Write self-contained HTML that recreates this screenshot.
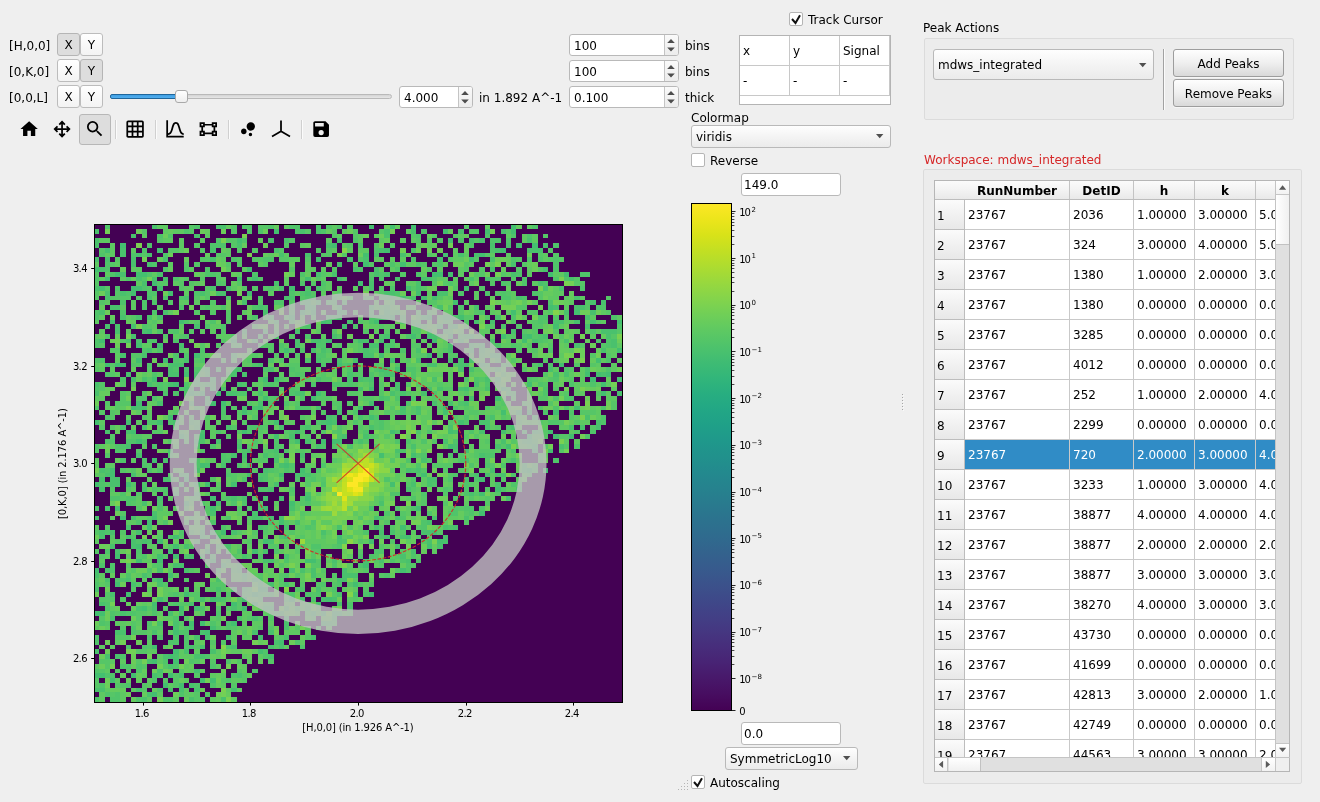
<!DOCTYPE html><html><head><meta charset="utf-8"><title>SliceViewer</title><style>
html,body{margin:0;padding:0}
body{width:1320px;height:802px;background:#efefef;position:relative;overflow:hidden;
 font-family:"DejaVu Sans","Liberation Sans",sans-serif;font-size:12px;color:#000;line-height:14px}
.a{position:absolute;box-sizing:border-box;white-space:nowrap}
.t{position:absolute;white-space:nowrap;line-height:14px;height:14px}
.btn{position:absolute;box-sizing:border-box;border:1px solid #9d9d9d;border-radius:3px;box-shadow:0 1px 0 rgba(255,255,255,0.55);overflow:visible;
 background:linear-gradient(#fefefe,#efefef 50%,#d9d9d9);text-align:center;white-space:nowrap}
.tb{position:absolute;box-sizing:border-box;border:1px solid #bcbcbc;border-radius:3px;
 background:linear-gradient(#ffffff,#f3f3f3);text-align:center;line-height:23px;font-size:12px}
.tb.on{background:#dddddd;border-color:#b5b5b5}
.edit{position:absolute;box-sizing:border-box;border:1px solid #b9b9b9;border-radius:3px;background:#fff;white-space:nowrap}
.cb{position:absolute;box-sizing:border-box;border:1px solid #b5b5b5;border-radius:2px;background:#fff;width:14px;height:14px}
.combo{position:absolute;box-sizing:border-box;border:1px solid #b9b9b9;border-radius:3px;
 background:linear-gradient(#fefefe,#f4f4f4 50%,#ebebeb);white-space:nowrap}
.grp{position:absolute;box-sizing:border-box;border:1px solid #dbdbdb;border-radius:2px;background:#ececec}
svg{position:absolute;overflow:visible}
#w{position:absolute;left:0;top:0;width:1320px;height:802px;will-change:transform}
</style></head><body><div id="w">
<div class="t" style="left:9px;top:39px">[H,0,0]</div>
<div class="tb on" style="left:57px;top:33px;width:23px;height:23px">X</div>
<div class="tb" style="left:80px;top:33px;width:23px;height:23px">Y</div>
<div class="t" style="left:9px;top:65px">[0,K,0]</div>
<div class="tb" style="left:57px;top:59px;width:23px;height:23px">X</div>
<div class="tb on" style="left:80px;top:59px;width:23px;height:23px">Y</div>
<div class="t" style="left:9px;top:91px">[0,0,L]</div>
<div class="tb" style="left:57px;top:85px;width:23px;height:23px">X</div>
<div class="tb" style="left:80px;top:85px;width:23px;height:23px">Y</div>
<div class="a" style="left:110px;top:94px;width:282px;height:5px;border:1px solid #b9b9b9;border-radius:3px;background:linear-gradient(#d4d4d4,#e6e6e6)"></div>
<div class="a" style="left:110px;top:94px;width:72px;height:5px;border:1px solid #1f669c;border-radius:2px;background:linear-gradient(#3f9fe3,#52aeee)"></div>
<div class="a" style="left:175px;top:90px;width:13px;height:13px;border:1px solid #a9a9a9;border-radius:3px;background:linear-gradient(#ffffff,#eeeeee)"></div>
<div class="edit" style="left:399px;top:86px;width:74px;height:22px"></div><div class="t" style="left:404px;top:91px">4.000</div><div class="a" style="left:458px;top:87px;width:14px;height:20px;background:linear-gradient(#fafafa,#ececec);border-left:1px solid #c4c4c4;border-radius:0 2px 2px 0"></div><svg style="left:458px;top:86px" width="15" height="22"><path d="M3.2 8.9l3.8-3.9 3.8 3.9z M3.2 13.5l3.8 3.9 3.8-3.9z" fill="#4d4d4d"/></svg>
<div class="t" style="left:479px;top:91px">in 1.892 A^-1</div>
<div class="edit" style="left:569px;top:34px;width:110px;height:22px"></div><div class="t" style="left:574px;top:39px">100</div><div class="a" style="left:664px;top:35px;width:14px;height:20px;background:linear-gradient(#fafafa,#ececec);border-left:1px solid #c4c4c4;border-radius:0 2px 2px 0"></div><svg style="left:664px;top:34px" width="15" height="22"><path d="M3.2 8.9l3.8-3.9 3.8 3.9z M3.2 13.5l3.8 3.9 3.8-3.9z" fill="#4d4d4d"/></svg>
<div class="t" style="left:685px;top:39px">bins</div>
<div class="edit" style="left:569px;top:60px;width:110px;height:22px"></div><div class="t" style="left:574px;top:65px">100</div><div class="a" style="left:664px;top:61px;width:14px;height:20px;background:linear-gradient(#fafafa,#ececec);border-left:1px solid #c4c4c4;border-radius:0 2px 2px 0"></div><svg style="left:664px;top:60px" width="15" height="22"><path d="M3.2 8.9l3.8-3.9 3.8 3.9z M3.2 13.5l3.8 3.9 3.8-3.9z" fill="#4d4d4d"/></svg>
<div class="t" style="left:685px;top:65px">bins</div>
<div class="edit" style="left:569px;top:86px;width:110px;height:22px"></div><div class="t" style="left:574px;top:91px">0.100</div><div class="a" style="left:664px;top:87px;width:14px;height:20px;background:linear-gradient(#fafafa,#ececec);border-left:1px solid #c4c4c4;border-radius:0 2px 2px 0"></div><svg style="left:664px;top:86px" width="15" height="22"><path d="M3.2 8.9l3.8-3.9 3.8 3.9z M3.2 13.5l3.8 3.9 3.8-3.9z" fill="#4d4d4d"/></svg>
<div class="t" style="left:685px;top:91px">thick</div>
<div class="a" style="left:79px;top:114px;width:32px;height:31px;border:1px solid #b7b7b7;border-radius:3px;background:#dddddd"></div>
<svg style="left:0;top:0" width="1320" height="802" viewBox="0 0 1320 802"><g fill="#000">
<path transform="translate(18.71 118.66) scale(0.870)" d="M10,20V14H14V20H19V12H22L12,3L2,12H5V20H10Z"/>
<path transform="translate(51.61 118.66) scale(0.870)" d="M13,11H18L16.5,9.5L17.92,8.08L21.84,12L17.92,15.92L16.5,14.5L18,13H13V18L14.5,16.5L15.92,17.92L12,21.84L8.08,17.92L9.5,16.5L11,18V13H6L7.5,14.5L6.08,15.92L2.16,12L6.08,8.08L7.5,9.5L6,11H11V6L9.5,7.5L8.08,6.08L12,2.16L15.92,6.08L14.5,7.5L13,6V11Z"/>
<path transform="translate(84.36 118.46) scale(0.870)" d="M9.5,3A6.5,6.5 0 0,1 16,9.5C16,11.11 15.41,12.59 14.44,13.73L14.71,14H15.5L20.5,19L19,20.5L14,15.5V14.71L13.73,14.44C12.59,15.41 11.11,16 9.5,16A6.5,6.5 0 0,1 3,9.5A6.5,6.5 0 0,1 9.5,3M9.5,5C7,5 5,7 5,9.5C5,12 7,14 9.5,14C12,14 14,12 14,9.5C14,7 12,5 9.5,5Z"/>
<path transform="translate(124.66 118.66) scale(0.870)" d="M10,4V8H14V4H10M16,4V8H20V4H16M16,10V14H20V10H16M16,16V20H20V16H16M14,20V16H10V20H14M8,20V16H4V20H8M8,14V10H4V14H8M8,8V4H4V8H8M10,14H14V10H10V14M4,2H20A2,2 0 0,1 22,4V20A2,2 0 0,1 20,22H4C2.92,22 2,21.1 2,20V4A2,2 0 0,1 4,2Z"/>
<path transform="translate(164.56 118.46) scale(0.870)" d="M9.96,11.31C10.82,8.1 11.5,6 13,6C14.5,6 15.18,8.1 16.04,11.31C17,14.92 18.1,19 22,19V17C19.8,17 19,14.54 17.97,10.8C17.08,7.46 16.15,4 13,4C9.85,4 8.92,7.46 8.03,10.8C7.03,14.54 6.2,17 4,17V2H2V22H22V20H4V19C7.9,19 9,14.92 9.96,11.31Z"/>
<path transform="translate(197.86 118.66) scale(0.870)" d="M2,4H8V6H16V4H22V10H20V14H22V20H16V18H8V20H2V14H4V10H2V4M16,10V8H8V10H6V14H8V16H16V14H18V10H16M4,6V8H6V6H4M18,6V8H20V6H18M4,16V18H6V16H4M18,16V18H20V16H18Z"/>
<path transform="translate(237.56 118.86) scale(0.870)" d="M7.2,11.2C8.97,11.2 10.4,12.63 10.4,14.4C10.4,16.17 8.97,17.6 7.2,17.6C5.43,17.6 4,16.17 4,14.4C4,12.63 5.43,11.2 7.2,11.2M14.8,16A2,2 0 0,1 16.8,18A2,2 0 0,1 14.8,20A2,2 0 0,1 12.8,18A2,2 0 0,1 14.8,16M15.2,4A4.8,4.8 0 0,1 20,8.8C20,11.45 17.85,13.6 15.2,13.6A4.8,4.8 0 0,1 10.4,8.8C10.4,6.15 12.55,4 15.2,4Z"/>
<path transform="translate(310.71 118.66) scale(0.870)" d="M15,9H5V5H15M12,19A3,3 0 0,1 9,16A3,3 0 0,1 12,13A3,3 0 0,1 15,16A3,3 0 0,1 12,19M17,3H5C3.89,3 3,3.9 3,5V19A2,2 0 0,0 5,21H19A2,2 0 0,0 21,19V7L17,3Z"/>
</g>
<path d="M281 120.6V131.3M281 131.3L272 136.6M281 131.3L290 136.6" stroke="#000" stroke-width="1.75" fill="none" stroke-linecap="butt"/>
<rect x="115" y="120" width="1" height="19" fill="#d0d0d0"/><rect x="116" y="120" width="1" height="19" fill="#fbfbfb"/>
<rect x="155" y="120" width="1" height="19" fill="#d0d0d0"/><rect x="156" y="120" width="1" height="19" fill="#fbfbfb"/>
<rect x="228" y="120" width="1" height="19" fill="#d0d0d0"/><rect x="229" y="120" width="1" height="19" fill="#fbfbfb"/>
<rect x="301" y="120" width="1" height="19" fill="#d0d0d0"/><rect x="302" y="120" width="1" height="19" fill="#fbfbfb"/>
</svg>
<div class="cb" style="left:789px;top:12px"></div><svg style="left:789px;top:12px" width="14" height="14"><path d="M3 7 L6.5 11 L11 3.2" fill="none" stroke="#111" stroke-width="2" stroke-linejoin="miter"/></svg>
<div class="t" style="left:808px;top:13px">Track Cursor</div>
<div class="a" style="left:739px;top:35px;width:152px;height:70px;background:#fff;border:1px solid #b4b4b4"></div>
<div class="a" style="left:789px;top:36px;width:1px;height:60px;background:#c8c8c8"></div>
<div class="a" style="left:839px;top:36px;width:1px;height:60px;background:#c8c8c8"></div>
<div class="a" style="left:889px;top:36px;width:1px;height:60px;background:#c8c8c8"></div>
<div class="a" style="left:740px;top:65px;width:150px;height:1px;background:#c8c8c8"></div>
<div class="a" style="left:740px;top:95px;width:150px;height:1px;background:#c8c8c8"></div>
<div class="t" style="left:743px;top:44px">x</div>
<div class="t" style="left:743px;top:74px">-</div>
<div class="t" style="left:793px;top:44px">y</div>
<div class="t" style="left:793px;top:74px">-</div>
<div class="t" style="left:843px;top:44px">Signal</div>
<div class="t" style="left:843px;top:74px">-</div>
<div class="t" style="left:691px;top:111px">Colormap</div>
<div class="combo" style="left:691px;top:125px;width:200px;height:23px"></div>
<div class="t" style="left:696px;top:130px">viridis</div>
<svg style="left:875.8px;top:134.0px" width="8" height="5"><path d="M0 0h7.4l-3.7 4.2z" fill="#505050"/></svg>
<div class="cb" style="left:691px;top:153px"></div>
<div class="t" style="left:710px;top:154px">Reverse</div>
<div class="edit" style="left:741px;top:173px;width:100px;height:23px"></div>
<div class="t" style="left:744px;top:178px">149.0</div>
<svg style="left:0;top:0" width="1320" height="802" viewBox="0 0 1320 802">
<defs><linearGradient id="vg" x1="0" y1="0" x2="0" y2="1"><stop offset="0.0000" stop-color="#fde725"/><stop offset="0.0312" stop-color="#ece51b"/><stop offset="0.0625" stop-color="#d8e219"/><stop offset="0.0938" stop-color="#c2df23"/><stop offset="0.1250" stop-color="#addc30"/><stop offset="0.1562" stop-color="#98d83e"/><stop offset="0.1875" stop-color="#84d44b"/><stop offset="0.2188" stop-color="#70cf57"/><stop offset="0.2500" stop-color="#5ec962"/><stop offset="0.2812" stop-color="#4ec36b"/><stop offset="0.3125" stop-color="#3fbc73"/><stop offset="0.3438" stop-color="#32b67a"/><stop offset="0.3750" stop-color="#28ae80"/><stop offset="0.4062" stop-color="#22a785"/><stop offset="0.4375" stop-color="#1fa088"/><stop offset="0.4688" stop-color="#1f988b"/><stop offset="0.5000" stop-color="#21918c"/><stop offset="0.5312" stop-color="#23898e"/><stop offset="0.5625" stop-color="#26828e"/><stop offset="0.5938" stop-color="#297a8e"/><stop offset="0.6250" stop-color="#2c728e"/><stop offset="0.6562" stop-color="#2f6b8e"/><stop offset="0.6875" stop-color="#33638d"/><stop offset="0.7188" stop-color="#375b8d"/><stop offset="0.7500" stop-color="#3b528b"/><stop offset="0.7812" stop-color="#3e4989"/><stop offset="0.8125" stop-color="#424086"/><stop offset="0.8438" stop-color="#453781"/><stop offset="0.8750" stop-color="#472d7b"/><stop offset="0.9062" stop-color="#482374"/><stop offset="0.9375" stop-color="#48186a"/><stop offset="0.9688" stop-color="#470d60"/><stop offset="1.0000" stop-color="#440154"/></linearGradient></defs>
<rect x="691.5" y="203.5" width="40.0" height="507.0" fill="url(#vg)" stroke="#000" stroke-width="1" shape-rendering="crispEdges"/>
<text x="739.3" y="682.8" font-size="10" textLength="11.6" lengthAdjust="spacing">10</text><text x="751.6" y="678.5" font-size="7">−8</text>
<text x="739.3" y="636.1" font-size="10" textLength="11.6" lengthAdjust="spacing">10</text><text x="751.6" y="631.8" font-size="7">−7</text>
<text x="739.3" y="589.4" font-size="10" textLength="11.6" lengthAdjust="spacing">10</text><text x="751.6" y="585.1" font-size="7">−6</text>
<text x="739.3" y="542.7" font-size="10" textLength="11.6" lengthAdjust="spacing">10</text><text x="751.6" y="538.4" font-size="7">−5</text>
<text x="739.3" y="496.0" font-size="10" textLength="11.6" lengthAdjust="spacing">10</text><text x="751.6" y="491.7" font-size="7">−4</text>
<text x="739.3" y="449.3" font-size="10" textLength="11.6" lengthAdjust="spacing">10</text><text x="751.6" y="445.0" font-size="7">−3</text>
<text x="739.3" y="402.6" font-size="10" textLength="11.6" lengthAdjust="spacing">10</text><text x="751.6" y="398.3" font-size="7">−2</text>
<text x="739.3" y="355.9" font-size="10" textLength="11.6" lengthAdjust="spacing">10</text><text x="751.6" y="351.6" font-size="7">−1</text>
<text x="739.3" y="309.2" font-size="10" textLength="11.6" lengthAdjust="spacing">10</text><text x="751.6" y="304.9" font-size="7">0</text>
<text x="739.3" y="262.5" font-size="10" textLength="11.6" lengthAdjust="spacing">10</text><text x="751.6" y="258.2" font-size="7">1</text>
<text x="739.3" y="215.8" font-size="10" textLength="11.6" lengthAdjust="spacing">10</text><text x="751.6" y="211.5" font-size="7">2</text>
<text x="739.3" y="714.7" font-size="10">0</text>
<path d="M732 678.5h3.5M732 632.5h3.5M732 585.5h3.5M732 538.5h3.5M732 492.5h3.5M732 445.5h3.5M732 398.5h3.5M732 351.5h3.5M732 305.5h3.5M732 258.5h3.5M732 211.5h3.5M732 710.5h3.5" stroke="#000" stroke-width="0.85" fill="none"/>
<path d="M732 664.5h2.4M732 656.5h2.4M732 650.5h2.4M732 646.5h2.4M732 642.5h2.4M732 639.5h2.4M732 636.5h2.4M732 634.5h2.4M732 618.5h2.4M732 609.5h2.4M732 603.5h2.4M732 599.5h2.4M732 595.5h2.4M732 592.5h2.4M732 589.5h2.4M732 587.5h2.4M732 571.5h2.4M732 563.5h2.4M732 557.5h2.4M732 552.5h2.4M732 549.5h2.4M732 545.5h2.4M732 543.5h2.4M732 540.5h2.4M732 524.5h2.4M732 516.5h2.4M732 510.5h2.4M732 506.5h2.4M732 502.5h2.4M732 499.5h2.4M732 496.5h2.4M732 494.5h2.4M732 477.5h2.4M732 469.5h2.4M732 463.5h2.4M732 459.5h2.4M732 455.5h2.4M732 452.5h2.4M732 449.5h2.4M732 447.5h2.4M732 431.5h2.4M732 423.5h2.4M732 417.5h2.4M732 412.5h2.4M732 408.5h2.4M732 405.5h2.4M732 403.5h2.4M732 400.5h2.4M732 384.5h2.4M732 376.5h2.4M732 370.5h2.4M732 365.5h2.4M732 362.5h2.4M732 359.5h2.4M732 356.5h2.4M732 354.5h2.4M732 337.5h2.4M732 329.5h2.4M732 323.5h2.4M732 319.5h2.4M732 315.5h2.4M732 312.5h2.4M732 309.5h2.4M732 307.5h2.4M732 291.5h2.4M732 282.5h2.4M732 277.5h2.4M732 272.5h2.4M732 268.5h2.4M732 265.5h2.4M732 263.5h2.4M732 260.5h2.4M732 244.5h2.4M732 236.5h2.4M732 230.5h2.4M732 225.5h2.4M732 222.5h2.4M732 219.5h2.4M732 216.5h2.4M732 213.5h2.4" stroke="#000" stroke-width="0.7" fill="none"/>
</svg>
<div class="edit" style="left:741px;top:722px;width:100px;height:23px"></div>
<div class="t" style="left:744px;top:727px">0.0</div>
<div class="combo" style="left:725px;top:747px;width:133px;height:23px"></div>
<div class="t" style="left:730px;top:752px">SymmetricLog10</div>
<svg style="left:842.8px;top:756.0px" width="8" height="5"><path d="M0 0h7.4l-3.7 4.2z" fill="#505050"/></svg>
<div class="cb" style="left:691px;top:775px"></div><svg style="left:691px;top:775px" width="14" height="14"><path d="M3 7 L6.5 11 L11 3.2" fill="none" stroke="#111" stroke-width="2" stroke-linejoin="miter"/></svg>
<div class="t" style="left:710px;top:776px">Autoscaling</div>
<svg style="left:0;top:0" width="1320" height="802"><rect x="678" y="789" width="1" height="1" fill="#b4b4b4"/><rect x="681" y="786" width="1" height="1" fill="#b4b4b4"/><rect x="681" y="789" width="1" height="1" fill="#b4b4b4"/><rect x="684" y="783" width="1" height="1" fill="#b4b4b4"/><rect x="684" y="786" width="1" height="1" fill="#b4b4b4"/><rect x="684" y="789" width="1" height="1" fill="#b4b4b4"/><rect x="687" y="780" width="1" height="1" fill="#b4b4b4"/><rect x="687" y="783" width="1" height="1" fill="#b4b4b4"/><rect x="687" y="786" width="1" height="1" fill="#b4b4b4"/><rect x="687" y="789" width="1" height="1" fill="#b4b4b4"/></svg>
<svg style="left:0;top:0" width="1320" height="802" viewBox="0 0 1320 802">
<rect x="94" y="224" width="529" height="479" fill="#440154"/>
<g shape-rendering="crispEdges">
<path fill="#50c46a" d="M105 224h5v5h-5zM194 224h6v5h-6zM242 224h10v5h-10zM268 224h6v5h-6zM289 224h11v5h-11zM326 224h6v5h-6zM337 224h5v5h-5zM532 224h6v5h-6zM184 229h5v5h-5zM247 229h5v5h-5zM258 229h5v5h-5zM295 229h5v5h-5zM321 229h5v5h-5zM421 229h6v5h-6zM157 234h6v4h-6zM168 234h5v4h-5zM416 234h5v4h-5zM485 234h5v4h-5zM511 234h5v4h-5zM527 234h5v4h-5zM216 238h5v5h-5zM242 238h5v5h-5zM353 238h5v5h-5zM458 238h6v5h-6zM490 238h11v5h-11zM506 238h5v5h-5zM147 243h5v5h-5zM210 243h16v5h-16zM358 243h5v5h-5zM469 243h5v5h-5zM553 243h6v5h-6zM142 248h5v5h-5zM374 248h5v5h-5zM411 248h5v5h-5zM490 248h5v5h-5zM99 253h6v4h-6zM131 253h5v4h-5zM163 253h5v4h-5zM231 257h6v5h-6zM263 257h11v5h-11zM411 257h5v5h-5zM511 257h5v5h-5zM527 257h5v5h-5zM538 257h5v5h-5zM553 257h6v5h-6zM105 262h5v5h-5zM152 262h5v5h-5zM390 262h5v5h-5zM416 262h5v5h-5zM437 262h6v5h-6zM553 262h6v5h-6zM105 267h5v5h-5zM163 267h5v5h-5zM184 267h5v5h-5zM205 267h5v5h-5zM358 267h5v5h-5zM395 267h5v5h-5zM553 267h6v5h-6zM110 272h5v5h-5zM147 272h5v5h-5zM205 272h11v5h-11zM252 272h6v5h-6zM300 272h5v5h-5zM379 272h5v5h-5zM416 272h5v5h-5zM516 272h6v5h-6zM580 272h10v5h-10zM94 277h5v4h-5zM126 277h5v4h-5zM173 277h6v4h-6zM369 277h5v4h-5zM379 277h5v4h-5zM432 277h5v4h-5zM495 277h6v4h-6zM522 277h5v4h-5zM553 277h6v4h-6zM564 277h5v4h-5zM216 281h5v5h-5zM300 281h5v5h-5zM321 281h5v5h-5zM448 281h5v5h-5zM501 281h5v5h-5zM522 281h5v5h-5zM543 281h5v5h-5zM115 286h5v5h-5zM142 286h5v5h-5zM268 286h6v5h-6zM305 286h6v5h-6zM390 286h5v5h-5zM580 286h5v5h-5zM126 291h5v5h-5zM147 291h10v5h-10zM194 291h6v5h-6zM289 291h6v5h-6zM300 291h5v5h-5zM395 291h5v5h-5zM458 291h6v5h-6zM485 291h5v5h-5zM501 291h5v5h-5zM532 291h6v5h-6zM163 296h5v4h-5zM179 296h5v4h-5zM226 296h5v4h-5zM258 296h5v4h-5zM305 296h11v4h-11zM332 296h5v4h-5zM363 296h6v4h-6zM379 296h16v4h-16zM501 296h10v4h-10zM522 296h5v4h-5zM120 300h6v5h-6zM142 300h5v5h-5zM152 300h5v5h-5zM274 300h10v5h-10zM300 300h5v5h-5zM326 300h11v5h-11zM342 300h5v5h-5zM548 300h5v5h-5zM142 305h5v5h-5zM179 305h5v5h-5zM205 305h5v5h-5zM221 305h5v5h-5zM252 305h6v5h-6zM263 305h5v5h-5zM384 305h6v5h-6zM458 305h6v5h-6zM596 305h10v5h-10zM94 310h5v5h-5zM120 310h6v5h-6zM152 310h5v5h-5zM289 310h6v5h-6zM369 310h5v5h-5zM395 310h5v5h-5zM479 310h6v5h-6zM94 315h5v5h-5zM252 315h6v5h-6zM332 315h5v5h-5zM369 315h10v5h-10zM453 315h5v5h-5zM511 315h5v5h-5zM538 315h10v5h-10zM611 315h6v5h-6zM184 320h5v4h-5zM210 320h6v4h-6zM289 320h6v4h-6zM369 320h5v4h-5zM400 320h6v4h-6zM538 320h5v4h-5zM142 324h5v5h-5zM205 324h5v5h-5zM221 324h5v5h-5zM305 324h6v5h-6zM353 324h5v5h-5zM416 324h5v5h-5zM448 324h5v5h-5zM501 324h5v5h-5zM617 324h5v5h-5zM157 329h6v5h-6zM173 329h6v5h-6zM411 329h10v5h-10zM427 329h5v5h-5zM443 329h5v5h-5zM590 329h6v5h-6zM105 334h5v5h-5zM184 334h5v5h-5zM258 334h5v5h-5zM274 334h5v5h-5zM305 334h6v5h-6zM379 334h5v5h-5zM406 334h5v5h-5zM464 334h5v5h-5zM538 334h5v5h-5zM94 339h5v4h-5zM147 339h10v4h-10zM173 339h6v4h-6zM321 339h5v4h-5zM390 339h5v4h-5zM490 339h5v4h-5zM538 339h5v4h-5zM596 339h5v4h-5zM606 339h5v4h-5zM94 343h5v5h-5zM258 343h5v5h-5zM279 343h5v5h-5zM316 343h10v5h-10zM384 343h11v5h-11zM495 343h6v5h-6zM511 343h5v5h-5zM606 343h5v5h-5zM142 348h5v5h-5zM157 348h6v5h-6zM200 348h5v5h-5zM300 348h5v5h-5zM369 348h5v5h-5zM400 348h6v5h-6zM479 348h6v5h-6zM548 348h5v5h-5zM173 353h6v5h-6zM184 353h5v5h-5zM316 353h10v5h-10zM94 358h11v5h-11zM173 358h6v5h-6zM200 358h5v5h-5zM268 358h6v5h-6zM305 358h6v5h-6zM606 358h5v5h-5zM147 363h5v4h-5zM252 363h6v4h-6zM321 363h5v4h-5zM342 363h5v4h-5zM506 363h5v4h-5zM548 363h5v4h-5zM173 367h6v5h-6zM194 367h6v5h-6zM263 367h5v5h-5zM289 367h6v5h-6zM347 367h6v5h-6zM374 367h5v5h-5zM406 367h10v5h-10zM495 367h6v5h-6zM564 367h5v5h-5zM606 367h5v5h-5zM105 372h5v5h-5zM152 372h5v5h-5zM205 372h5v5h-5zM295 372h5v5h-5zM369 372h5v5h-5zM379 372h5v5h-5zM411 372h5v5h-5zM120 377h6v5h-6zM221 377h5v5h-5zM363 377h6v5h-6zM411 377h5v5h-5zM464 377h5v5h-5zM474 377h5v5h-5zM527 377h5v5h-5zM553 377h6v5h-6zM157 382h6v5h-6zM184 382h5v5h-5zM194 382h6v5h-6zM205 382h11v5h-11zM242 382h5v5h-5zM263 382h11v5h-11zM311 382h5v5h-5zM332 382h10v5h-10zM347 382h6v5h-6zM369 382h5v5h-5zM485 382h5v5h-5zM538 382h5v5h-5zM569 382h5v5h-5zM590 382h6v5h-6zM94 387h5v4h-5zM157 387h6v4h-6zM179 387h5v4h-5zM189 387h5v4h-5zM221 387h5v4h-5zM289 387h6v4h-6zM506 387h5v4h-5zM543 387h5v4h-5zM163 391h5v5h-5zM173 391h6v5h-6zM184 391h5v5h-5zM194 391h6v5h-6zM237 391h10v5h-10zM289 391h6v5h-6zM432 391h5v5h-5zM506 391h10v5h-10zM543 391h5v5h-5zM142 396h5v5h-5zM152 396h5v5h-5zM274 396h5v5h-5zM300 396h5v5h-5zM384 396h6v5h-6zM395 396h5v5h-5zM411 396h5v5h-5zM553 396h6v5h-6zM564 396h10v5h-10zM189 401h5v5h-5zM268 401h6v5h-6zM284 401h5v5h-5zM406 401h5v5h-5zM458 401h6v5h-6zM94 406h5v4h-5zM295 406h16v4h-16zM337 406h5v4h-5zM374 406h5v4h-5zM453 406h5v4h-5zM485 406h5v4h-5zM553 406h6v4h-6zM564 406h5v4h-5zM601 406h5v4h-5zM221 410h5v5h-5zM353 410h5v5h-5zM543 410h5v5h-5zM569 410h5v5h-5zM105 415h5v5h-5zM332 415h5v5h-5zM374 415h5v5h-5zM464 415h5v5h-5zM601 415h5v5h-5zM147 420h10v5h-10zM168 420h5v5h-5zM189 420h5v5h-5zM316 420h5v5h-5zM353 420h5v5h-5zM379 420h5v5h-5zM464 420h5v5h-5zM548 420h11v5h-11zM601 420h5v5h-5zM194 425h6v5h-6zM247 425h16v5h-16zM300 425h5v5h-5zM326 425h6v5h-6zM337 425h5v5h-5zM379 425h5v5h-5zM506 425h5v5h-5zM216 430h5v4h-5zM247 430h5v4h-5zM289 430h6v4h-6zM337 430h5v4h-5zM363 430h6v4h-6zM395 430h5v4h-5zM416 430h5v4h-5zM427 430h5v4h-5zM469 430h5v4h-5zM538 430h5v4h-5zM590 430h6v4h-6zM194 434h6v5h-6zM337 434h5v5h-5zM585 434h5v5h-5zM105 439h10v5h-10zM126 439h10v5h-10zM142 439h5v5h-5zM200 439h5v5h-5zM237 439h5v5h-5zM252 439h6v5h-6zM274 439h5v5h-5zM395 439h5v5h-5zM406 439h5v5h-5zM421 439h6v5h-6zM453 439h5v5h-5zM522 439h5v5h-5zM94 444h5v5h-5zM115 444h11v5h-11zM152 444h5v5h-5zM194 444h6v5h-6zM210 444h6v5h-6zM274 444h5v5h-5zM321 444h5v5h-5zM347 444h6v5h-6zM574 444h6v5h-6zM115 449h5v4h-5zM242 449h5v4h-5zM268 449h6v4h-6zM284 449h5v4h-5zM400 449h6v4h-6zM453 449h5v4h-5zM511 449h5v4h-5zM168 453h5v5h-5zM221 453h5v5h-5zM274 453h5v5h-5zM421 453h6v5h-6zM448 453h5v5h-5zM485 453h10v5h-10zM120 458h6v5h-6zM142 458h5v5h-5zM189 458h11v5h-11zM221 458h10v5h-10zM242 458h5v5h-5zM406 458h5v5h-5zM458 458h6v5h-6zM553 458h6v5h-6zM142 463h5v5h-5zM194 463h6v5h-6zM237 463h5v5h-5zM289 463h6v5h-6zM321 463h5v5h-5zM416 463h5v5h-5zM469 463h5v5h-5zM485 463h5v5h-5zM501 463h5v5h-5zM105 468h5v5h-5zM147 468h5v5h-5zM157 468h6v5h-6zM268 468h6v5h-6zM284 468h5v5h-5zM316 468h5v5h-5zM411 468h5v5h-5zM179 473h5v4h-5zM226 473h5v4h-5zM258 473h10v4h-10zM453 473h5v4h-5zM495 473h6v4h-6zM511 473h5v4h-5zM242 477h5v5h-5zM263 477h5v5h-5zM295 477h5v5h-5zM311 477h5v5h-5zM384 477h6v5h-6zM411 477h5v5h-5zM448 477h5v5h-5zM474 477h5v5h-5zM99 482h6v5h-6zM142 482h5v5h-5zM179 482h5v5h-5zM321 482h5v5h-5zM432 482h5v5h-5zM464 482h5v5h-5zM511 482h5v5h-5zM152 487h5v5h-5zM163 487h5v5h-5zM173 487h6v5h-6zM258 487h10v5h-10zM289 487h6v5h-6zM443 487h5v5h-5zM464 487h5v5h-5zM501 487h5v5h-5zM120 492h6v4h-6zM390 492h10v4h-10zM421 492h6v4h-6zM464 492h5v4h-5zM110 496h10v5h-10zM126 496h10v5h-10zM226 496h5v5h-5zM411 496h5v5h-5zM453 496h5v5h-5zM126 501h5v5h-5zM157 501h6v5h-6zM200 501h5v5h-5zM231 501h6v5h-6zM242 501h5v5h-5zM305 501h6v5h-6zM94 506h5v5h-5zM157 506h6v5h-6zM258 506h5v5h-5zM395 506h5v5h-5zM411 506h5v5h-5zM453 506h5v5h-5zM464 506h10v5h-10zM479 506h6v5h-6zM384 511h6v5h-6zM427 511h5v5h-5zM448 511h10v5h-10zM469 511h5v5h-5zM226 516h5v4h-5zM379 516h5v4h-5zM400 516h6v4h-6zM136 520h6v5h-6zM163 520h5v5h-5zM184 520h5v5h-5zM210 520h6v5h-6zM311 520h5v5h-5zM421 520h6v5h-6zM221 525h5v5h-5zM263 525h5v5h-5zM305 525h6v5h-6zM421 525h6v5h-6zM448 525h5v5h-5zM105 530h5v5h-5zM179 530h5v5h-5zM363 530h6v5h-6zM168 535h5v4h-5zM279 535h5v4h-5zM379 535h5v4h-5zM136 539h6v5h-6zM147 539h5v5h-5zM194 539h6v5h-6zM342 539h5v5h-5zM311 544h10v5h-10zM337 544h5v5h-5zM105 549h5v5h-5zM136 549h6v5h-6zM237 549h5v5h-5zM274 549h5v5h-5zM374 549h10v5h-10zM142 554h5v5h-5zM184 554h5v5h-5zM200 554h5v5h-5zM210 554h6v5h-6zM258 554h5v5h-5zM358 554h5v5h-5zM369 554h5v5h-5zM411 554h5v5h-5zM205 559h5v4h-5zM226 559h5v4h-5zM284 559h5v4h-5zM390 559h5v4h-5zM400 559h6v4h-6zM416 559h5v4h-5zM99 563h6v5h-6zM110 563h5v5h-5zM157 563h6v5h-6zM237 563h5v5h-5zM332 563h5v5h-5zM358 563h5v5h-5zM406 563h5v5h-5zM110 568h5v5h-5zM147 568h5v5h-5zM237 568h5v5h-5zM406 568h5v5h-5zM126 573h5v5h-5zM284 573h5v5h-5zM384 573h6v5h-6zM115 578h11v4h-11zM152 578h5v4h-5zM242 578h5v4h-5zM258 578h5v4h-5zM94 582h5v5h-5zM321 582h5v5h-5zM337 582h5v5h-5zM242 587h5v5h-5zM300 587h5v5h-5zM332 587h5v5h-5zM173 592h6v5h-6zM258 592h5v5h-5zM268 592h6v5h-6zM289 592h6v5h-6zM305 592h6v5h-6zM316 592h5v5h-5zM363 592h6v5h-6zM221 597h5v5h-5zM311 597h5v5h-5zM105 602h5v4h-5zM173 602h6v4h-6zM347 602h6v4h-6zM105 606h5v5h-5zM200 606h5v5h-5zM284 606h5v5h-5zM295 606h5v5h-5zM305 606h6v5h-6zM347 606h6v5h-6zM110 611h5v5h-5zM126 611h10v5h-10zM152 611h5v5h-5zM216 611h5v5h-5zM274 611h10v5h-10zM173 616h6v5h-6zM237 616h5v5h-5zM332 616h5v5h-5zM99 621h6v5h-6zM147 621h5v5h-5zM210 621h6v5h-6zM226 621h5v5h-5zM326 621h6v5h-6zM131 626h5v4h-5zM184 626h5v4h-5zM226 626h5v4h-5zM316 626h5v4h-5zM131 630h5v5h-5zM179 630h10v5h-10zM94 635h5v5h-5zM147 635h5v5h-5zM157 635h6v5h-6zM173 635h6v5h-6zM184 635h5v5h-5zM94 640h5v5h-5zM168 640h11v5h-11zM184 640h5v5h-5zM295 640h5v5h-5zM126 645h5v4h-5zM142 645h5v4h-5zM184 645h5v4h-5zM226 645h5v4h-5zM300 645h5v4h-5zM263 649h5v5h-5zM120 654h6v5h-6zM205 654h5v5h-5zM263 654h5v5h-5zM163 659h5v5h-5zM189 659h5v5h-5zM226 659h5v5h-5zM120 664h11v5h-11zM136 664h6v5h-6zM173 664h6v5h-6zM210 664h6v5h-6zM94 669h5v4h-5zM136 669h6v4h-6zM252 669h6v4h-6zM105 673h10v5h-10zM157 673h6v5h-6zM231 673h6v5h-6zM152 678h5v5h-5zM226 678h5v5h-5zM99 683h6v5h-6zM126 683h5v5h-5zM194 683h6v5h-6zM210 683h6v5h-6zM157 688h6v4h-6zM105 692h5v5h-5zM115 692h5v5h-5zM179 692h5v5h-5zM94 697h5v5h-5zM110 697h10v5h-10zM136 697h6v5h-6zM163 697h10v5h-10z"/>
<path fill="#4ac16d" d="M152 224h5v5h-5zM216 224h10v5h-10zM316 224h5v5h-5zM94 229h5v5h-5zM300 229h5v5h-5zM316 229h5v5h-5zM384 229h6v5h-6zM411 229h5v5h-5zM458 229h6v5h-6zM501 229h5v5h-5zM131 234h5v4h-5zM194 234h6v4h-6zM384 234h6v4h-6zM94 238h5v5h-5zM268 238h6v5h-6zM284 238h5v5h-5zM337 238h5v5h-5zM469 238h5v5h-5zM479 238h6v5h-6zM527 238h5v5h-5zM94 243h5v5h-5zM237 243h5v5h-5zM326 243h6v5h-6zM490 243h5v5h-5zM506 243h5v5h-5zM543 243h5v5h-5zM120 248h6v5h-6zM210 248h6v5h-6zM274 248h5v5h-5zM379 248h5v5h-5zM495 248h6v5h-6zM527 248h16v5h-16zM120 253h6v4h-6zM136 253h6v4h-6zM147 253h5v4h-5zM279 253h5v4h-5zM305 253h6v4h-6zM374 253h5v4h-5zM400 253h6v4h-6zM458 253h6v4h-6zM474 253h5v4h-5zM94 257h5v5h-5zM105 257h5v5h-5zM131 257h5v5h-5zM163 257h5v5h-5zM210 257h6v5h-6zM347 257h6v5h-6zM363 257h6v5h-6zM437 257h6v5h-6zM490 257h5v5h-5zM131 262h5v5h-5zM147 262h5v5h-5zM337 262h5v5h-5zM511 262h5v5h-5zM99 267h6v5h-6zM353 267h5v5h-5zM374 267h5v5h-5zM490 267h5v5h-5zM543 267h5v5h-5zM120 272h6v5h-6zM157 272h6v5h-6zM316 272h5v5h-5zM332 272h5v5h-5zM374 272h5v5h-5zM384 272h6v5h-6zM511 272h5v5h-5zM136 277h6v4h-6zM152 277h5v4h-5zM163 277h5v4h-5zM337 277h5v4h-5zM395 277h5v4h-5zM421 277h11v4h-11zM469 277h5v4h-5zM485 277h5v4h-5zM569 277h5v4h-5zM142 281h5v5h-5zM274 281h5v5h-5zM369 281h5v5h-5zM416 281h5v5h-5zM538 281h5v5h-5zM94 286h5v5h-5zM210 286h6v5h-6zM226 286h5v5h-5zM279 286h5v5h-5zM316 286h5v5h-5zM369 286h5v5h-5zM416 286h5v5h-5zM543 286h5v5h-5zM559 286h5v5h-5zM105 291h5v5h-5zM120 291h6v5h-6zM200 291h5v5h-5zM216 291h10v5h-10zM305 291h6v5h-6zM384 291h11v5h-11zM437 291h11v5h-11zM105 296h5v4h-5zM147 296h5v4h-5zM184 296h5v4h-5zM284 296h11v4h-11zM411 296h5v4h-5zM516 296h6v4h-6zM574 296h6v4h-6zM242 300h5v5h-5zM305 300h6v5h-6zM316 300h5v5h-5zM590 300h6v5h-6zM601 300h5v5h-5zM110 305h10v5h-10zM258 305h5v5h-5zM305 305h11v5h-11zM337 305h5v5h-5zM369 305h5v5h-5zM437 305h6v5h-6zM474 305h5v5h-5zM553 305h6v5h-6zM574 305h11v5h-11zM99 310h6v5h-6zM163 310h5v5h-5zM263 310h5v5h-5zM342 310h5v5h-5zM384 310h6v5h-6zM564 310h5v5h-5zM590 310h6v5h-6zM120 315h6v5h-6zM136 315h6v5h-6zM147 315h5v5h-5zM157 315h6v5h-6zM268 315h6v5h-6zM326 315h6v5h-6zM337 315h5v5h-5zM379 315h11v5h-11zM421 315h6v5h-6zM443 315h10v5h-10zM495 315h6v5h-6zM585 315h5v5h-5zM274 320h5v4h-5zM326 320h6v4h-6zM347 320h6v4h-6zM474 320h5v4h-5zM490 320h5v4h-5zM553 320h11v4h-11zM574 320h6v4h-6zM105 324h5v5h-5zM115 324h5v5h-5zM131 324h5v5h-5zM194 324h6v5h-6zM437 324h6v5h-6zM453 324h5v5h-5zM585 324h5v5h-5zM115 329h5v5h-5zM142 329h5v5h-5zM242 329h5v5h-5zM263 329h5v5h-5zM295 329h5v5h-5zM511 329h5v5h-5zM601 329h16v5h-16zM131 334h5v5h-5zM332 334h5v5h-5zM384 334h6v5h-6zM432 334h5v5h-5zM469 334h5v5h-5zM522 334h5v5h-5zM543 334h5v5h-5zM606 334h5v5h-5zM126 339h5v4h-5zM136 339h6v4h-6zM252 339h6v4h-6zM295 339h5v4h-5zM311 339h10v4h-10zM363 339h6v4h-6zM458 339h6v4h-6zM532 339h6v4h-6zM564 339h5v4h-5zM611 339h6v4h-6zM179 343h5v5h-5zM295 343h5v5h-5zM369 343h10v5h-10zM448 343h5v5h-5zM469 343h5v5h-5zM479 343h6v5h-6zM574 343h6v5h-6zM611 343h6v5h-6zM147 348h5v5h-5zM311 348h5v5h-5zM321 348h5v5h-5zM363 348h6v5h-6zM416 348h5v5h-5zM448 348h5v5h-5zM469 348h5v5h-5zM601 348h5v5h-5zM120 353h6v5h-6zM142 353h5v5h-5zM231 353h6v5h-6zM363 353h11v5h-11zM490 353h11v5h-11zM184 358h5v5h-5zM316 358h5v5h-5zM337 358h5v5h-5zM353 358h5v5h-5zM416 358h5v5h-5zM448 358h5v5h-5zM458 358h6v5h-6zM469 358h5v5h-5zM168 363h16v4h-16zM258 363h5v4h-5zM347 363h6v4h-6zM427 363h10v4h-10zM458 363h11v4h-11zM479 363h6v4h-6zM538 363h5v4h-5zM168 367h5v5h-5zM184 367h5v5h-5zM205 367h5v5h-5zM216 367h5v5h-5zM231 367h11v5h-11zM268 367h6v5h-6zM384 367h6v5h-6zM458 367h6v5h-6zM469 367h5v5h-5zM548 367h5v5h-5zM585 367h5v5h-5zM126 372h5v5h-5zM168 372h11v5h-11zM194 372h6v5h-6zM231 372h6v5h-6zM242 372h5v5h-5zM347 372h6v5h-6zM384 372h11v5h-11zM553 372h6v5h-6zM564 372h5v5h-5zM601 372h5v5h-5zM131 377h5v5h-5zM142 377h5v5h-5zM194 377h6v5h-6zM210 377h6v5h-6zM316 377h5v5h-5zM347 377h6v5h-6zM358 377h5v5h-5zM369 377h5v5h-5zM432 377h5v5h-5zM485 377h5v5h-5zM495 377h6v5h-6zM94 382h5v5h-5zM147 382h5v5h-5zM168 382h5v5h-5zM237 382h5v5h-5zM395 382h5v5h-5zM474 382h5v5h-5zM184 387h5v4h-5zM210 387h6v4h-6zM358 387h5v4h-5zM395 387h5v4h-5zM427 387h5v4h-5zM437 387h6v4h-6zM458 387h6v4h-6zM485 387h5v4h-5zM94 391h5v5h-5zM226 391h11v5h-11zM258 391h5v5h-5zM295 391h10v5h-10zM390 391h5v5h-5zM400 391h6v5h-6zM421 391h6v5h-6zM617 391h5v5h-5zM205 396h5v5h-5zM379 396h5v5h-5zM469 396h5v5h-5zM157 401h6v5h-6zM205 401h5v5h-5zM258 401h5v5h-5zM432 401h5v5h-5zM448 401h5v5h-5zM464 401h5v5h-5zM136 406h11v4h-11zM221 406h5v4h-5zM242 406h5v4h-5zM252 406h6v4h-6zM316 406h5v4h-5zM416 406h5v4h-5zM337 410h5v5h-5zM400 410h6v5h-6zM416 410h5v5h-5zM516 410h6v5h-6zM326 415h6v5h-6zM358 415h5v5h-5zM490 415h5v5h-5zM532 415h6v5h-6zM585 415h5v5h-5zM173 420h6v5h-6zM321 420h5v5h-5zM332 420h5v5h-5zM479 420h11v5h-11zM596 420h5v5h-5zM120 425h6v5h-6zM142 425h5v5h-5zM226 425h5v5h-5zM279 425h5v5h-5zM305 425h6v5h-6zM369 425h5v5h-5zM448 425h5v5h-5zM485 425h5v5h-5zM511 425h5v5h-5zM569 425h5v5h-5zM580 425h5v5h-5zM596 425h5v5h-5zM105 430h5v4h-5zM126 430h5v4h-5zM200 430h5v4h-5zM453 430h5v4h-5zM479 430h6v4h-6zM501 430h5v4h-5zM522 430h5v4h-5zM532 430h6v4h-6zM289 434h6v5h-6zM342 434h5v5h-5zM363 434h6v5h-6zM216 439h5v5h-5zM305 439h6v5h-6zM358 439h5v5h-5zM443 439h5v5h-5zM501 439h5v5h-5zM527 439h5v5h-5zM126 444h5v5h-5zM237 444h5v5h-5zM316 444h5v5h-5zM411 444h5v5h-5zM453 444h5v5h-5zM495 444h6v5h-6zM532 444h6v5h-6zM559 444h5v5h-5zM168 449h5v4h-5zM247 449h5v4h-5zM274 449h5v4h-5zM395 449h5v4h-5zM136 453h6v5h-6zM231 453h6v5h-6zM242 453h5v5h-5zM263 453h5v5h-5zM300 453h5v5h-5zM479 453h6v5h-6zM163 458h5v5h-5zM274 458h5v5h-5zM421 458h6v5h-6zM464 458h5v5h-5zM511 458h5v5h-5zM205 463h5v5h-5zM221 463h5v5h-5zM247 463h5v5h-5zM279 463h5v5h-5zM522 463h5v5h-5zM99 468h6v5h-6zM194 468h6v5h-6zM263 468h5v5h-5zM406 468h5v5h-5zM416 468h5v5h-5zM490 468h5v5h-5zM522 468h5v5h-5zM105 473h5v4h-5zM131 473h5v4h-5zM184 473h5v4h-5zM247 473h5v4h-5zM295 473h16v4h-16zM474 473h5v4h-5zM485 473h5v4h-5zM501 473h5v4h-5zM99 477h6v5h-6zM110 477h10v5h-10zM163 477h10v5h-10zM258 477h5v5h-5zM427 477h10v5h-10zM464 477h5v5h-5zM110 482h10v5h-10zM194 482h6v5h-6zM274 482h5v5h-5zM411 482h5v5h-5zM427 482h5v5h-5zM495 482h6v5h-6zM99 487h6v5h-6zM142 487h5v5h-5zM268 487h6v5h-6zM406 487h5v5h-5zM516 487h6v5h-6zM173 492h6v4h-6zM194 492h6v4h-6zM305 492h6v4h-6zM469 492h5v4h-5zM157 496h6v5h-6zM231 496h6v5h-6zM242 496h5v5h-5zM263 496h5v5h-5zM506 496h5v5h-5zM142 501h5v5h-5zM216 501h5v5h-5zM379 501h5v5h-5zM105 506h5v5h-5zM289 506h6v5h-6zM369 506h5v5h-5zM152 511h5v5h-5zM210 511h6v5h-6zM252 511h6v5h-6zM94 516h5v4h-5zM131 516h5v4h-5zM252 516h11v4h-11zM268 516h6v4h-6zM279 516h5v4h-5zM374 516h5v4h-5zM395 516h5v4h-5zM432 516h5v4h-5zM464 516h5v4h-5zM268 520h6v5h-6zM295 520h5v5h-5zM427 520h5v5h-5zM126 525h5v5h-5zM258 525h5v5h-5zM274 525h5v5h-5zM284 525h5v5h-5zM337 525h5v5h-5zM374 525h5v5h-5zM443 525h5v5h-5zM453 525h5v5h-5zM99 530h6v5h-6zM110 530h5v5h-5zM136 530h6v5h-6zM200 530h5v5h-5zM210 530h6v5h-6zM231 530h6v5h-6zM321 530h5v5h-5zM379 530h5v5h-5zM390 530h5v5h-5zM421 530h11v5h-11zM99 535h6v4h-6zM126 535h5v4h-5zM200 535h5v4h-5zM216 535h5v4h-5zM384 535h6v4h-6zM400 535h6v4h-6zM443 535h5v4h-5zM131 539h5v5h-5zM142 539h5v5h-5zM268 539h6v5h-6zM337 539h5v5h-5zM427 539h5v5h-5zM443 539h5v5h-5zM110 544h5v5h-5zM131 544h5v5h-5zM184 544h5v5h-5zM226 544h5v5h-5zM395 544h5v5h-5zM437 544h6v5h-6zM115 549h5v5h-5zM263 549h5v5h-5zM411 549h5v5h-5zM189 554h5v5h-5zM242 554h5v5h-5zM284 554h5v5h-5zM400 554h6v5h-6zM263 559h11v4h-11zM332 559h5v4h-5zM363 559h6v4h-6zM379 559h5v4h-5zM406 559h5v4h-5zM173 563h11v5h-11zM221 563h5v5h-5zM105 568h5v5h-5zM157 568h6v5h-6zM184 568h5v5h-5zM216 568h5v5h-5zM289 568h6v5h-6zM300 568h5v5h-5zM311 568h5v5h-5zM342 568h5v5h-5zM94 573h5v5h-5zM142 573h5v5h-5zM242 573h5v5h-5zM311 573h5v5h-5zM342 573h16v5h-16zM105 578h5v4h-5zM126 578h5v4h-5zM216 578h5v4h-5zM337 578h10v4h-10zM131 582h5v5h-5zM157 582h6v5h-6zM258 582h5v5h-5zM268 582h6v5h-6zM284 582h5v5h-5zM94 587h5v5h-5zM216 587h5v5h-5zM231 587h6v5h-6zM316 587h5v5h-5zM110 592h5v5h-5zM337 592h5v5h-5zM353 592h5v5h-5zM200 597h5v5h-5zM216 597h5v5h-5zM300 597h5v5h-5zM321 597h5v5h-5zM332 597h5v5h-5zM99 602h6v4h-6zM189 602h5v4h-5zM316 602h5v4h-5zM337 602h5v4h-5zM136 606h6v5h-6zM152 606h5v5h-5zM231 606h6v5h-6zM263 606h11v5h-11zM120 611h6v5h-6zM168 611h5v5h-5zM179 611h5v5h-5zM311 611h5v5h-5zM321 611h5v5h-5zM332 611h10v5h-10zM110 616h5v5h-5zM252 616h6v5h-6zM157 621h6v5h-6zM173 621h6v5h-6zM284 621h5v5h-5zM321 621h5v5h-5zM173 626h6v4h-6zM189 626h5v4h-5zM284 626h5v4h-5zM115 630h11v5h-11zM152 630h5v5h-5zM200 630h5v5h-5zM252 630h6v5h-6zM268 630h6v5h-6zM194 635h6v5h-6zM205 635h5v5h-5zM226 635h5v5h-5zM284 635h5v5h-5zM311 635h5v5h-5zM274 640h5v5h-5zM189 645h5v4h-5zM200 645h5v4h-5zM231 645h6v4h-6zM268 645h6v4h-6zM279 645h5v4h-5zM94 649h5v5h-5zM184 649h5v5h-5zM210 649h6v5h-6zM105 654h5v5h-5zM115 654h5v5h-5zM163 654h5v5h-5zM173 654h6v5h-6zM194 654h11v5h-11zM268 654h6v5h-6zM147 659h5v5h-5zM168 664h5v5h-5zM157 669h6v4h-6zM152 673h5v5h-5zM179 673h5v5h-5zM237 673h5v5h-5zM189 683h5v5h-5zM94 688h11v4h-11zM136 688h6v4h-6zM168 688h5v4h-5zM179 688h5v4h-5zM194 688h6v4h-6zM147 692h5v5h-5zM142 697h5v5h-5zM189 697h5v5h-5zM221 697h5v5h-5z"/>
<path fill="#5ec962" d="M157 224h11v5h-11zM284 224h5v5h-5zM332 224h5v5h-5zM485 224h5v5h-5zM527 224h5v5h-5zM163 229h5v5h-5zM173 229h11v5h-11zM342 229h5v5h-5zM406 229h5v5h-5zM142 234h5v4h-5zM205 234h5v4h-5zM337 234h5v4h-5zM358 234h5v4h-5zM374 234h5v4h-5zM458 234h6v4h-6zM506 234h5v4h-5zM522 234h5v4h-5zM532 234h6v4h-6zM99 238h11v5h-11zM163 238h10v5h-10zM179 238h5v5h-5zM200 238h5v5h-5zM326 238h6v5h-6zM358 238h5v5h-5zM379 238h5v5h-5zM400 238h6v5h-6zM411 238h5v5h-5zM522 238h5v5h-5zM532 238h6v5h-6zM110 243h5v5h-5zM179 243h5v5h-5zM300 243h5v5h-5zM342 243h5v5h-5zM416 243h5v5h-5zM427 243h5v5h-5zM110 248h5v5h-5zM131 248h5v5h-5zM179 248h5v5h-5zM226 248h5v5h-5zM332 248h5v5h-5zM347 248h6v5h-6zM358 248h11v5h-11zM453 248h5v5h-5zM105 253h10v4h-10zM226 253h5v4h-5zM268 253h6v4h-6zM284 253h5v4h-5zM432 253h5v4h-5zM453 253h5v4h-5zM464 253h5v4h-5zM490 253h5v4h-5zM506 253h5v4h-5zM543 253h5v4h-5zM221 257h5v5h-5zM289 257h11v5h-11zM374 257h10v5h-10zM390 257h5v5h-5zM400 257h6v5h-6zM453 257h11v5h-11zM543 257h5v5h-5zM94 262h5v5h-5zM115 262h5v5h-5zM168 262h5v5h-5zM258 262h5v5h-5zM305 262h6v5h-6zM353 262h5v5h-5zM384 262h6v5h-6zM395 262h5v5h-5zM406 262h10v5h-10zM469 262h5v5h-5zM490 262h5v5h-5zM131 267h11v5h-11zM189 267h5v5h-5zM226 267h5v5h-5zM242 267h5v5h-5zM305 267h11v5h-11zM321 267h5v5h-5zM379 267h5v5h-5zM390 267h5v5h-5zM437 267h6v5h-6zM458 267h6v5h-6zM527 267h5v5h-5zM105 272h5v5h-5zM152 272h5v5h-5zM200 272h5v5h-5zM237 272h5v5h-5zM326 272h6v5h-6zM421 272h6v5h-6zM458 272h6v5h-6zM506 272h5v5h-5zM527 272h5v5h-5zM553 272h11v5h-11zM99 277h6v4h-6zM120 277h6v4h-6zM179 277h5v4h-5zM221 277h5v4h-5zM284 277h5v4h-5zM300 277h5v4h-5zM321 277h5v4h-5zM437 277h11v4h-11zM453 277h5v4h-5zM464 277h5v4h-5zM474 277h5v4h-5zM136 281h6v5h-6zM173 281h6v5h-6zM194 281h6v5h-6zM284 281h5v5h-5zM326 281h6v5h-6zM390 281h5v5h-5zM406 281h10v5h-10zM453 281h5v5h-5zM469 281h5v5h-5zM532 281h6v5h-6zM184 286h10v5h-10zM231 286h6v5h-6zM274 286h5v5h-5zM326 286h6v5h-6zM337 286h5v5h-5zM353 286h5v5h-5zM363 286h6v5h-6zM553 286h6v5h-6zM184 291h5v5h-5zM268 291h6v5h-6zM295 291h5v5h-5zM321 291h5v5h-5zM332 291h5v5h-5zM374 291h5v5h-5zM427 291h5v5h-5zM474 291h5v5h-5zM511 291h5v5h-5zM553 291h11v5h-11zM152 296h5v4h-5zM242 296h5v4h-5zM337 296h5v4h-5zM448 296h5v4h-5zM474 296h5v4h-5zM511 296h5v4h-5zM548 296h11v4h-11zM564 296h5v4h-5zM580 296h5v4h-5zM105 300h5v5h-5zM131 300h5v5h-5zM179 300h10v5h-10zM194 300h6v5h-6zM311 300h5v5h-5zM374 300h5v5h-5zM416 300h5v5h-5zM464 300h5v5h-5zM506 300h5v5h-5zM522 300h5v5h-5zM532 300h6v5h-6zM569 300h5v5h-5zM120 305h6v5h-6zM131 305h5v5h-5zM157 305h6v5h-6zM210 305h11v5h-11zM279 305h5v5h-5zM332 305h5v5h-5zM374 305h5v5h-5zM390 305h5v5h-5zM406 305h10v5h-10zM432 305h5v5h-5zM485 305h5v5h-5zM564 305h5v5h-5zM168 310h5v5h-5zM242 310h5v5h-5zM432 310h5v5h-5zM443 310h10v5h-10zM490 310h5v5h-5zM506 310h5v5h-5zM543 310h5v5h-5zM601 310h5v5h-5zM99 315h6v5h-6zM126 315h5v5h-5zM237 315h5v5h-5zM247 315h5v5h-5zM300 315h5v5h-5zM358 315h5v5h-5zM416 315h5v5h-5zM522 315h5v5h-5zM590 315h6v5h-6zM617 315h5v5h-5zM94 320h5v4h-5zM147 320h5v4h-5zM189 320h5v4h-5zM205 320h5v4h-5zM268 320h6v4h-6zM363 320h6v4h-6zM437 320h6v4h-6zM527 320h5v4h-5zM564 320h10v4h-10zM585 320h5v4h-5zM601 320h5v4h-5zM152 324h5v5h-5zM179 324h5v5h-5zM210 324h11v5h-11zM274 324h5v5h-5zM284 324h5v5h-5zM369 324h10v5h-10zM384 324h11v5h-11zM464 324h5v5h-5zM559 324h5v5h-5zM99 329h6v5h-6zM126 329h5v5h-5zM200 329h5v5h-5zM210 329h6v5h-6zM316 329h5v5h-5zM374 329h5v5h-5zM395 329h5v5h-5zM479 329h11v5h-11zM527 329h5v5h-5zM564 329h5v5h-5zM574 329h6v5h-6zM585 329h5v5h-5zM596 329h5v5h-5zM94 334h5v5h-5zM173 334h6v5h-6zM216 334h15v5h-15zM242 334h5v5h-5zM321 334h5v5h-5zM474 334h5v5h-5zM569 334h5v5h-5zM590 334h6v5h-6zM263 339h5v4h-5zM411 339h5v4h-5zM421 339h6v4h-6zM443 339h5v4h-5zM506 339h5v4h-5zM548 339h5v4h-5zM559 339h5v4h-5zM142 343h10v5h-10zM284 343h5v5h-5zM300 343h5v5h-5zM332 343h5v5h-5zM347 343h11v5h-11zM395 343h5v5h-5zM427 343h5v5h-5zM443 343h5v5h-5zM501 343h10v5h-10zM538 343h5v5h-5zM564 343h5v5h-5zM617 343h5v5h-5zM152 348h5v5h-5zM184 348h5v5h-5zM247 348h5v5h-5zM316 348h5v5h-5zM342 348h5v5h-5zM353 348h5v5h-5zM411 348h5v5h-5zM437 348h6v5h-6zM464 348h5v5h-5zM485 348h10v5h-10zM527 348h5v5h-5zM569 348h5v5h-5zM606 348h11v5h-11zM115 353h5v5h-5zM205 353h5v5h-5zM242 353h10v5h-10zM258 353h5v5h-5zM284 353h5v5h-5zM326 353h6v5h-6zM342 353h5v5h-5zM400 353h6v5h-6zM411 353h5v5h-5zM469 353h5v5h-5zM485 353h5v5h-5zM506 353h5v5h-5zM532 353h6v5h-6zM559 353h5v5h-5zM611 353h6v5h-6zM115 358h5v5h-5zM131 358h5v5h-5zM242 358h5v5h-5zM289 358h11v5h-11zM342 358h5v5h-5zM400 358h6v5h-6zM479 358h6v5h-6zM601 358h5v5h-5zM617 358h5v5h-5zM94 363h5v4h-5zM157 363h6v4h-6zM194 363h11v4h-11zM242 363h10v4h-10zM284 363h5v4h-5zM358 363h5v4h-5zM379 363h5v4h-5zM406 363h10v4h-10zM421 363h6v4h-6zM596 363h5v4h-5zM611 363h6v4h-6zM99 367h6v5h-6zM110 367h5v5h-5zM300 367h11v5h-11zM316 367h5v5h-5zM332 367h5v5h-5zM342 367h5v5h-5zM369 367h5v5h-5zM416 367h5v5h-5zM474 367h21v5h-21zM532 367h6v5h-6zM553 367h6v5h-6zM580 367h5v5h-5zM601 367h5v5h-5zM611 367h6v5h-6zM115 372h5v5h-5zM142 372h5v5h-5zM157 372h6v5h-6zM200 372h5v5h-5zM263 372h5v5h-5zM279 372h5v5h-5zM316 372h5v5h-5zM332 372h5v5h-5zM342 372h5v5h-5zM374 372h5v5h-5zM400 372h6v5h-6zM427 372h16v5h-16zM448 372h5v5h-5zM469 372h5v5h-5zM485 372h5v5h-5zM569 372h5v5h-5zM580 372h5v5h-5zM284 377h5v5h-5zM300 377h5v5h-5zM337 377h5v5h-5zM379 377h5v5h-5zM390 377h5v5h-5zM421 377h6v5h-6zM448 377h5v5h-5zM538 377h5v5h-5zM564 377h5v5h-5zM580 377h5v5h-5zM131 382h5v5h-5zM252 382h11v5h-11zM295 382h5v5h-5zM363 382h6v5h-6zM421 382h16v5h-16zM443 382h10v5h-10zM495 382h6v5h-6zM553 382h6v5h-6zM574 382h16v5h-16zM596 382h5v5h-5zM606 382h5v5h-5zM200 387h5v4h-5zM231 387h6v4h-6zM258 387h5v4h-5zM332 387h5v4h-5zM390 387h5v4h-5zM469 387h16v4h-16zM574 387h6v4h-6zM611 387h6v4h-6zM126 391h5v5h-5zM252 391h6v5h-6zM263 391h5v5h-5zM358 391h5v5h-5zM411 391h5v5h-5zM458 391h6v5h-6zM527 391h5v5h-5zM538 391h5v5h-5zM559 391h5v5h-5zM574 391h11v5h-11zM606 391h5v5h-5zM94 396h11v5h-11zM157 396h6v5h-6zM184 396h5v5h-5zM258 396h5v5h-5zM358 396h5v5h-5zM374 396h5v5h-5zM427 396h5v5h-5zM437 396h11v5h-11zM501 396h5v5h-5zM596 396h5v5h-5zM606 396h11v5h-11zM152 401h5v5h-5zM226 401h5v5h-5zM252 401h6v5h-6zM289 401h6v5h-6zM321 401h5v5h-5zM363 401h6v5h-6zM395 401h5v5h-5zM437 401h6v5h-6zM495 401h6v5h-6zM527 401h5v5h-5zM574 401h6v5h-6zM105 406h5v4h-5zM120 406h6v4h-6zM200 406h5v4h-5zM268 406h6v4h-6zM284 406h5v4h-5zM332 406h5v4h-5zM353 406h5v4h-5zM458 406h6v4h-6zM469 406h5v4h-5zM501 406h5v4h-5zM527 406h5v4h-5zM590 406h6v4h-6zM115 410h5v5h-5zM136 410h6v5h-6zM147 410h5v5h-5zM168 410h5v5h-5zM252 410h6v5h-6zM311 410h5v5h-5zM347 410h6v5h-6zM369 410h5v5h-5zM390 410h5v5h-5zM406 410h5v5h-5zM427 410h5v5h-5zM437 410h6v5h-6zM464 410h5v5h-5zM479 410h6v5h-6zM490 410h5v5h-5zM596 410h5v5h-5zM126 415h5v5h-5zM147 415h5v5h-5zM179 415h5v5h-5zM200 415h5v5h-5zM226 415h5v5h-5zM237 415h5v5h-5zM305 415h6v5h-6zM342 415h5v5h-5zM390 415h5v5h-5zM406 415h5v5h-5zM421 415h11v5h-11zM458 415h6v5h-6zM474 415h5v5h-5zM506 415h5v5h-5zM553 415h6v5h-6zM574 415h6v5h-6zM596 415h5v5h-5zM99 420h6v5h-6zM136 420h6v5h-6zM179 420h5v5h-5zM205 420h5v5h-5zM216 420h5v5h-5zM263 420h5v5h-5zM284 420h11v5h-11zM305 420h6v5h-6zM358 420h5v5h-5zM369 420h5v5h-5zM384 420h6v5h-6zM421 420h6v5h-6zM432 420h5v5h-5zM453 420h5v5h-5zM527 420h5v5h-5zM543 420h5v5h-5zM580 420h10v5h-10zM157 425h6v5h-6zM189 425h5v5h-5zM205 425h11v5h-11zM311 425h10v5h-10zM342 425h5v5h-5zM363 425h6v5h-6zM384 425h6v5h-6zM427 425h5v5h-5zM490 425h5v5h-5zM543 425h5v5h-5zM559 425h10v5h-10zM184 430h5v4h-5zM210 430h6v4h-6zM221 430h5v4h-5zM263 430h5v4h-5zM311 430h5v4h-5zM358 430h5v4h-5zM464 430h5v4h-5zM506 430h5v4h-5zM569 430h5v4h-5zM126 434h5v5h-5zM142 434h10v5h-10zM210 434h6v5h-6zM258 434h5v5h-5zM268 434h6v5h-6zM284 434h5v5h-5zM300 434h5v5h-5zM374 434h5v5h-5zM416 434h5v5h-5zM443 434h5v5h-5zM511 434h5v5h-5zM532 434h11v5h-11zM258 439h5v5h-5zM311 439h5v5h-5zM411 439h5v5h-5zM464 439h5v5h-5zM479 439h6v5h-6zM495 439h6v5h-6zM516 439h6v5h-6zM564 439h5v5h-5zM574 439h6v5h-6zM99 444h6v5h-6zM110 444h5v5h-5zM142 444h5v5h-5zM173 444h6v5h-6zM311 444h5v5h-5zM337 444h5v5h-5zM406 444h5v5h-5zM443 444h5v5h-5zM469 444h5v5h-5zM479 444h11v5h-11zM516 444h11v5h-11zM237 449h5v4h-5zM295 449h5v4h-5zM305 449h6v4h-6zM342 449h5v4h-5zM421 449h6v4h-6zM495 449h6v4h-6zM506 449h5v4h-5zM173 453h6v5h-6zM258 453h5v5h-5zM279 453h5v5h-5zM311 453h5v5h-5zM347 453h6v5h-6zM437 453h6v5h-6zM469 453h5v5h-5zM511 453h5v5h-5zM543 453h5v5h-5zM94 458h5v5h-5zM131 458h5v5h-5zM205 458h11v5h-11zM252 458h6v5h-6zM321 458h5v5h-5zM337 458h5v5h-5zM453 458h5v5h-5zM474 458h5v5h-5zM516 458h6v5h-6zM94 463h5v5h-5zM105 463h10v5h-10zM157 463h6v5h-6zM242 463h5v5h-5zM274 463h5v5h-5zM305 463h6v5h-6zM126 468h5v5h-5zM152 468h5v5h-5zM173 468h6v5h-6zM279 468h5v5h-5zM326 468h6v5h-6zM390 468h5v5h-5zM400 468h6v5h-6zM464 468h5v5h-5zM479 468h6v5h-6zM94 473h5v4h-5zM237 473h10v4h-10zM274 473h5v4h-5zM316 473h5v4h-5zM395 473h5v4h-5zM490 473h5v4h-5zM522 473h5v4h-5zM147 477h5v5h-5zM226 477h5v5h-5zM268 477h6v5h-6zM316 477h5v5h-5zM395 477h5v5h-5zM406 477h5v5h-5zM421 477h6v5h-6zM443 477h5v5h-5zM490 477h5v5h-5zM516 477h6v5h-6zM189 482h5v5h-5zM216 482h5v5h-5zM226 482h5v5h-5zM268 482h6v5h-6zM421 482h6v5h-6zM448 482h5v5h-5zM474 482h5v5h-5zM490 482h5v5h-5zM131 487h5v5h-5zM184 487h5v5h-5zM194 487h6v5h-6zM210 487h6v5h-6zM416 487h5v5h-5zM437 487h6v5h-6zM474 487h5v5h-5zM506 487h10v5h-10zM110 492h10v4h-10zM152 492h5v4h-5zM205 492h5v4h-5zM221 492h5v4h-5zM316 492h5v4h-5zM411 492h5v4h-5zM458 492h6v4h-6zM490 492h5v4h-5zM136 496h6v5h-6zM168 496h5v5h-5zM374 496h5v5h-5zM390 496h5v5h-5zM406 496h5v5h-5zM479 496h6v5h-6zM490 496h5v5h-5zM136 501h6v5h-6zM189 501h5v5h-5zM205 501h5v5h-5zM226 501h5v5h-5zM274 501h5v5h-5zM295 501h5v5h-5zM311 501h10v5h-10zM374 501h5v5h-5zM416 501h5v5h-5zM464 501h5v5h-5zM173 506h6v5h-6zM216 506h5v5h-5zM295 506h5v5h-5zM406 506h5v5h-5zM432 506h5v5h-5zM448 506h5v5h-5zM157 511h16v5h-16zM194 511h6v5h-6zM237 511h5v5h-5zM289 511h6v5h-6zM305 511h6v5h-6zM353 511h5v5h-5zM363 511h6v5h-6zM406 511h5v5h-5zM474 511h5v5h-5zM110 516h5v4h-5zM136 516h11v4h-11zM157 516h6v4h-6zM200 516h5v4h-5zM221 516h5v4h-5zM263 516h5v4h-5zM300 516h5v4h-5zM384 516h6v4h-6zM411 516h5v4h-5zM448 516h10v4h-10zM469 516h5v4h-5zM126 520h10v5h-10zM157 520h6v5h-6zM194 520h6v5h-6zM237 520h5v5h-5zM247 520h5v5h-5zM274 520h5v5h-5zM289 520h6v5h-6zM321 520h11v5h-11zM363 520h6v5h-6zM443 520h5v5h-5zM94 525h5v5h-5zM200 525h5v5h-5zM226 525h5v5h-5zM268 525h6v5h-6zM295 525h10v5h-10zM358 525h5v5h-5zM369 525h5v5h-5zM406 525h5v5h-5zM437 525h6v5h-6zM131 530h5v5h-5zM157 530h6v5h-6zM268 530h6v5h-6zM284 530h5v5h-5zM300 530h5v5h-5zM311 530h5v5h-5zM326 530h6v5h-6zM353 530h10v5h-10zM395 530h5v5h-5zM411 530h5v5h-5zM120 535h6v4h-6zM221 535h10v4h-10zM252 535h6v4h-6zM263 535h5v4h-5zM295 535h5v4h-5zM311 535h5v4h-5zM342 535h5v4h-5zM374 535h5v4h-5zM395 535h5v4h-5zM427 535h5v4h-5zM94 539h5v5h-5zM110 539h5v5h-5zM242 539h5v5h-5zM258 539h5v5h-5zM284 539h5v5h-5zM305 539h21v5h-21zM363 539h6v5h-6zM406 539h5v5h-5zM147 544h10v5h-10zM179 544h5v5h-5zM237 544h5v5h-5zM247 544h5v5h-5zM284 544h5v5h-5zM321 544h11v5h-11zM384 544h6v5h-6zM152 549h11v5h-11zM258 549h5v5h-5zM279 549h5v5h-5zM432 549h5v5h-5zM105 554h5v5h-5zM126 554h5v5h-5zM152 554h5v5h-5zM237 554h5v5h-5zM289 554h6v5h-6zM347 554h6v5h-6zM390 554h5v5h-5zM416 554h5v5h-5zM99 559h6v4h-6zM142 559h10v4h-10zM221 559h5v4h-5zM252 559h11v4h-11zM274 559h5v4h-5zM326 559h6v4h-6zM395 559h5v4h-5zM168 563h5v5h-5zM226 563h11v5h-11zM263 563h5v5h-5zM347 563h6v5h-6zM374 563h5v5h-5zM126 568h5v5h-5zM194 568h6v5h-6zM263 568h5v5h-5zM305 568h6v5h-6zM347 568h6v5h-6zM358 568h5v5h-5zM99 573h6v5h-6zM136 573h6v5h-6zM173 573h6v5h-6zM231 573h11v5h-11zM247 573h11v5h-11zM268 573h6v5h-6zM300 573h5v5h-5zM316 573h10v5h-10zM131 578h5v4h-5zM142 578h5v4h-5zM168 578h5v4h-5zM231 578h11v4h-11zM247 578h5v4h-5zM300 578h5v4h-5zM311 578h5v4h-5zM326 578h11v4h-11zM353 578h5v4h-5zM369 578h5v4h-5zM99 582h6v5h-6zM263 582h5v5h-5zM289 582h6v5h-6zM363 582h6v5h-6zM147 587h5v5h-5zM163 587h10v5h-10zM194 587h6v5h-6zM205 587h5v5h-5zM321 587h11v5h-11zM342 587h5v5h-5zM353 587h5v5h-5zM163 592h5v5h-5zM179 592h5v5h-5zM205 597h5v5h-5zM226 597h5v5h-5zM347 597h6v5h-6zM358 597h5v5h-5zM142 602h5v4h-5zM221 602h5v4h-5zM300 602h5v4h-5zM110 606h5v5h-5zM258 606h5v5h-5zM300 606h5v5h-5zM316 606h5v5h-5zM147 611h5v5h-5zM157 611h6v5h-6zM242 611h10v5h-10zM263 611h5v5h-5zM295 611h5v5h-5zM316 611h5v5h-5zM342 611h5v5h-5zM163 616h10v5h-10zM210 616h6v5h-6zM242 616h5v5h-5zM305 616h6v5h-6zM115 621h11v5h-11zM136 621h6v5h-6zM216 621h5v5h-5zM242 621h5v5h-5zM252 621h11v5h-11zM268 621h6v5h-6zM94 626h5v4h-5zM105 626h5v4h-5zM179 626h5v4h-5zM221 626h5v4h-5zM237 626h10v4h-10zM252 626h6v4h-6zM305 626h6v4h-6zM326 626h6v4h-6zM147 630h5v5h-5zM157 630h6v5h-6zM168 630h5v5h-5zM231 630h6v5h-6zM284 630h16v5h-16zM305 630h6v5h-6zM231 635h6v5h-6zM242 635h10v5h-10zM274 635h5v5h-5zM115 640h5v5h-5zM147 640h5v5h-5zM194 640h6v5h-6zM231 640h6v5h-6zM300 640h5v5h-5zM99 645h6v4h-6zM110 645h5v4h-5zM163 645h5v4h-5zM210 645h6v4h-6zM284 645h5v4h-5zM147 649h10v5h-10zM179 649h5v5h-5zM194 649h6v5h-6zM216 649h5v5h-5zM231 649h11v5h-11zM252 649h6v5h-6zM157 654h6v5h-6zM179 654h15v5h-15zM216 654h5v5h-5zM242 654h5v5h-5zM258 654h5v5h-5zM110 659h5v5h-5zM120 659h6v5h-6zM157 659h6v5h-6zM247 659h5v5h-5zM94 664h5v5h-5zM184 664h5v5h-5zM216 664h5v5h-5zM242 664h5v5h-5zM105 669h5v4h-5zM189 669h5v4h-5zM200 669h5v4h-5zM242 669h5v4h-5zM142 673h5v5h-5zM210 673h6v5h-6zM221 673h5v5h-5zM115 678h5v5h-5zM147 678h5v5h-5zM184 678h5v5h-5zM231 678h11v5h-11zM147 683h5v5h-5zM168 683h5v5h-5zM221 683h5v5h-5zM105 688h5v4h-5zM131 688h5v4h-5zM184 688h5v4h-5zM226 688h5v4h-5zM237 688h5v4h-5zM99 692h6v5h-6zM120 692h6v5h-6zM157 692h6v5h-6zM184 692h10v5h-10zM99 697h6v5h-6zM120 697h6v5h-6zM147 697h5v5h-5zM173 697h6v5h-6zM210 697h6v5h-6zM231 697h6v5h-6z"/>
<path fill="#56c667" d="M189 224h5v5h-5zM231 224h6v5h-6zM258 224h10v5h-10zM347 224h6v5h-6zM464 224h5v5h-5zM142 229h5v5h-5zM189 229h5v5h-5zM231 229h6v5h-6zM305 229h6v5h-6zM332 229h5v5h-5zM353 229h5v5h-5zM379 229h5v5h-5zM469 229h10v5h-10zM506 229h5v5h-5zM332 234h5v4h-5zM353 234h5v4h-5zM411 234h5v4h-5zM432 234h5v4h-5zM453 234h5v4h-5zM543 234h5v4h-5zM157 238h6v5h-6zM226 238h11v5h-11zM289 238h6v5h-6zM416 238h5v5h-5zM427 238h5v5h-5zM437 238h6v5h-6zM474 238h5v5h-5zM194 243h6v5h-6zM231 243h6v5h-6zM284 243h5v5h-5zM347 243h6v5h-6zM374 243h5v5h-5zM390 243h5v5h-5zM99 248h6v5h-6zM168 248h11v5h-11zM200 248h5v5h-5zM237 248h5v5h-5zM252 248h6v5h-6zM279 248h5v5h-5zM316 248h5v5h-5zM326 248h6v5h-6zM548 248h5v5h-5zM142 253h5v4h-5zM216 253h10v4h-10zM321 253h11v4h-11zM342 253h5v4h-5zM427 253h5v4h-5zM485 253h5v4h-5zM538 253h5v4h-5zM553 253h6v4h-6zM115 257h5v5h-5zM200 257h10v5h-10zM237 257h5v5h-5zM252 257h11v5h-11zM279 257h10v5h-10zM305 257h6v5h-6zM358 257h5v5h-5zM448 257h5v5h-5zM474 257h5v5h-5zM516 257h6v5h-6zM548 257h5v5h-5zM559 257h5v5h-5zM110 262h5v5h-5zM184 262h5v5h-5zM194 262h6v5h-6zM226 262h5v5h-5zM237 262h5v5h-5zM263 262h5v5h-5zM369 262h5v5h-5zM421 262h6v5h-6zM432 262h5v5h-5zM464 262h5v5h-5zM522 262h5v5h-5zM289 267h6v5h-6zM332 267h5v5h-5zM427 267h5v5h-5zM464 267h5v5h-5zM479 267h6v5h-6zM516 267h6v5h-6zM538 267h5v5h-5zM94 272h5v5h-5zM216 272h5v5h-5zM321 272h5v5h-5zM369 272h5v5h-5zM400 272h6v5h-6zM474 272h11v5h-11zM501 272h5v5h-5zM142 277h5v4h-5zM184 277h5v4h-5zM200 277h5v4h-5zM216 277h5v4h-5zM247 277h5v4h-5zM258 277h5v4h-5zM316 277h5v4h-5zM342 277h5v4h-5zM490 277h5v4h-5zM511 277h5v4h-5zM574 277h6v4h-6zM94 281h5v5h-5zM157 281h11v5h-11zM179 281h5v5h-5zM189 281h5v5h-5zM221 281h5v5h-5zM237 281h5v5h-5zM311 281h5v5h-5zM432 281h5v5h-5zM443 281h5v5h-5zM490 281h5v5h-5zM506 281h5v5h-5zM574 281h11v5h-11zM105 286h5v5h-5zM147 286h5v5h-5zM179 286h5v5h-5zM205 286h5v5h-5zM242 286h5v5h-5zM252 286h6v5h-6zM263 286h5v5h-5zM321 286h5v5h-5zM379 286h5v5h-5zM411 286h5v5h-5zM421 286h6v5h-6zM453 286h5v5h-5zM479 286h6v5h-6zM94 291h5v5h-5zM115 291h5v5h-5zM205 291h5v5h-5zM311 291h5v5h-5zM337 291h5v5h-5zM379 291h5v5h-5zM495 291h6v5h-6zM506 291h5v5h-5zM538 291h5v5h-5zM94 296h5v4h-5zM110 296h21v4h-21zM136 296h6v4h-6zM194 296h6v4h-6zM205 296h5v4h-5zM300 296h5v4h-5zM347 296h6v4h-6zM369 296h5v4h-5zM395 296h5v4h-5zM406 296h5v4h-5zM437 296h6v4h-6zM538 296h5v4h-5zM606 296h5v4h-5zM99 300h6v5h-6zM168 300h5v5h-5zM210 300h6v5h-6zM258 300h5v5h-5zM289 300h6v5h-6zM390 300h5v5h-5zM427 300h10v5h-10zM585 300h5v5h-5zM200 305h5v5h-5zM289 305h6v5h-6zM379 305h5v5h-5zM448 305h5v5h-5zM516 305h11v5h-11zM585 305h5v5h-5zM194 310h6v5h-6zM210 310h6v5h-6zM226 310h5v5h-5zM305 310h6v5h-6zM353 310h5v5h-5zM390 310h5v5h-5zM416 310h5v5h-5zM427 310h5v5h-5zM458 310h6v5h-6zM474 310h5v5h-5zM527 310h11v5h-11zM548 310h5v5h-5zM606 310h5v5h-5zM131 315h5v5h-5zM226 315h5v5h-5zM263 315h5v5h-5zM284 315h5v5h-5zM311 315h5v5h-5zM400 315h6v5h-6zM437 315h6v5h-6zM464 315h10v5h-10zM485 315h5v5h-5zM553 315h6v5h-6zM564 315h5v5h-5zM152 320h5v4h-5zM194 320h6v4h-6zM226 320h5v4h-5zM358 320h5v4h-5zM411 320h10v4h-10zM443 320h10v4h-10zM464 320h5v4h-5zM511 320h5v4h-5zM532 320h6v4h-6zM543 320h5v4h-5zM596 320h5v4h-5zM147 324h5v5h-5zM252 324h6v5h-6zM300 324h5v5h-5zM379 324h5v5h-5zM411 324h5v5h-5zM421 324h6v5h-6zM485 324h10v5h-10zM516 324h6v5h-6zM532 324h11v5h-11zM168 329h5v5h-5zM189 329h5v5h-5zM221 329h5v5h-5zM274 329h5v5h-5zM332 329h5v5h-5zM363 329h6v5h-6zM384 329h6v5h-6zM448 329h5v5h-5zM522 329h5v5h-5zM532 329h6v5h-6zM553 329h6v5h-6zM617 329h5v5h-5zM163 334h5v5h-5zM179 334h5v5h-5zM231 334h6v5h-6zM289 334h6v5h-6zM337 334h5v5h-5zM416 334h5v5h-5zM437 334h6v5h-6zM458 334h6v5h-6zM479 334h6v5h-6zM506 334h10v5h-10zM532 334h6v5h-6zM559 334h5v5h-5zM611 334h6v5h-6zM120 339h6v4h-6zM221 339h5v4h-5zM353 339h5v4h-5zM543 339h5v4h-5zM99 343h6v5h-6zM200 343h5v5h-5zM216 343h5v5h-5zM231 343h11v5h-11zM263 343h11v5h-11zM337 343h5v5h-5zM358 343h5v5h-5zM411 343h10v5h-10zM474 343h5v5h-5zM490 343h5v5h-5zM516 343h6v5h-6zM527 343h5v5h-5zM548 343h5v5h-5zM580 343h5v5h-5zM601 343h5v5h-5zM110 348h10v5h-10zM179 348h5v5h-5zM268 348h6v5h-6zM279 348h5v5h-5zM289 348h6v5h-6zM326 348h6v5h-6zM358 348h5v5h-5zM374 348h5v5h-5zM384 348h6v5h-6zM443 348h5v5h-5zM516 348h6v5h-6zM532 348h6v5h-6zM131 353h11v5h-11zM200 353h5v5h-5zM252 353h6v5h-6zM274 353h5v5h-5zM295 353h5v5h-5zM416 353h11v5h-11zM437 353h6v5h-6zM448 353h10v5h-10zM479 353h6v5h-6zM590 353h6v5h-6zM606 353h5v5h-5zM179 358h5v5h-5zM194 358h6v5h-6zM221 358h5v5h-5zM231 358h6v5h-6zM247 358h5v5h-5zM279 358h5v5h-5zM321 358h11v5h-11zM406 358h5v5h-5zM495 358h6v5h-6zM511 358h5v5h-5zM543 358h5v5h-5zM553 358h6v5h-6zM110 363h5v4h-5zM131 363h11v4h-11zM289 363h11v4h-11zM374 363h5v4h-5zM395 363h5v4h-5zM453 363h5v4h-5zM485 363h5v4h-5zM501 363h5v4h-5zM532 363h6v4h-6zM574 363h6v4h-6zM590 363h6v4h-6zM94 367h5v5h-5zM147 367h5v5h-5zM200 367h5v5h-5zM295 367h5v5h-5zM358 367h5v5h-5zM522 367h5v5h-5zM569 367h5v5h-5zM110 372h5v5h-5zM226 372h5v5h-5zM289 372h6v5h-6zM300 372h5v5h-5zM321 372h5v5h-5zM353 372h10v5h-10zM501 372h5v5h-5zM543 372h5v5h-5zM147 377h5v5h-5zM258 377h5v5h-5zM279 377h5v5h-5zM305 377h6v5h-6zM321 377h11v5h-11zM479 377h6v5h-6zM532 377h6v5h-6zM548 377h5v5h-5zM569 377h5v5h-5zM99 382h6v5h-6zM120 382h6v5h-6zM152 382h5v5h-5zM163 382h5v5h-5zM200 382h5v5h-5zM274 382h5v5h-5zM342 382h5v5h-5zM353 382h5v5h-5zM379 382h5v5h-5zM406 382h5v5h-5zM416 382h5v5h-5zM437 382h6v5h-6zM543 382h5v5h-5zM99 387h6v4h-6zM163 387h5v4h-5zM247 387h5v4h-5zM279 387h5v4h-5zM295 387h5v4h-5zM379 387h5v4h-5zM443 387h10v4h-10zM553 387h6v4h-6zM120 391h6v5h-6zM142 391h5v5h-5zM321 391h5v5h-5zM347 391h11v5h-11zM379 391h5v5h-5zM395 391h5v5h-5zM406 391h5v5h-5zM464 391h5v5h-5zM564 391h5v5h-5zM596 391h5v5h-5zM120 396h6v5h-6zM136 396h6v5h-6zM268 396h6v5h-6zM316 396h16v5h-16zM363 396h11v5h-11zM432 396h5v5h-5zM511 396h5v5h-5zM538 396h10v5h-10zM105 401h5v5h-5zM115 401h16v5h-16zM247 401h5v5h-5zM295 401h5v5h-5zM332 401h10v5h-10zM347 401h6v5h-6zM501 401h5v5h-5zM522 401h5v5h-5zM548 401h5v5h-5zM611 401h6v5h-6zM115 406h5v4h-5zM194 406h6v4h-6zM231 406h6v4h-6zM390 406h5v4h-5zM411 406h5v4h-5zM437 406h6v4h-6zM464 406h5v4h-5zM495 406h6v4h-6zM538 406h5v4h-5zM611 406h6v4h-6zM99 410h6v5h-6zM110 410h5v5h-5zM173 410h6v5h-6zM237 410h5v5h-5zM247 410h5v5h-5zM321 410h5v5h-5zM384 410h6v5h-6zM395 410h5v5h-5zM411 410h5v5h-5zM469 410h10v5h-10zM580 410h16v5h-16zM110 415h5v5h-5zM142 415h5v5h-5zM189 415h5v5h-5zM205 415h5v5h-5zM221 415h5v5h-5zM252 415h6v5h-6zM263 415h5v5h-5zM300 415h5v5h-5zM363 415h6v5h-6zM453 415h5v5h-5zM485 415h5v5h-5zM501 415h5v5h-5zM569 415h5v5h-5zM194 420h6v5h-6zM242 420h5v5h-5zM268 420h6v5h-6zM374 420h5v5h-5zM448 420h5v5h-5zM516 420h6v5h-6zM538 420h5v5h-5zM559 420h5v5h-5zM574 420h6v5h-6zM99 425h6v5h-6zM110 425h5v5h-5zM173 425h6v5h-6zM231 425h6v5h-6zM263 425h5v5h-5zM358 425h5v5h-5zM374 425h5v5h-5zM495 425h6v5h-6zM590 425h6v5h-6zM152 430h11v4h-11zM179 430h5v4h-5zM237 430h5v4h-5zM258 430h5v4h-5zM284 430h5v4h-5zM300 430h5v4h-5zM321 430h5v4h-5zM332 430h5v4h-5zM543 430h5v4h-5zM574 430h6v4h-6zM110 434h5v5h-5zM131 434h11v5h-11zM184 434h5v5h-5zM226 434h5v5h-5zM305 434h6v5h-6zM369 434h5v5h-5zM384 434h6v5h-6zM464 434h5v5h-5zM474 434h5v5h-5zM543 434h5v5h-5zM559 434h10v5h-10zM168 439h5v5h-5zM184 439h5v5h-5zM289 439h6v5h-6zM353 439h5v5h-5zM363 439h6v5h-6zM432 439h5v5h-5zM485 439h5v5h-5zM511 439h5v5h-5zM532 439h6v5h-6zM247 444h11v5h-11zM279 444h5v5h-5zM332 444h5v5h-5zM374 444h5v5h-5zM501 444h5v5h-5zM527 444h5v5h-5zM543 444h5v5h-5zM564 444h5v5h-5zM94 449h5v4h-5zM120 449h6v4h-6zM136 449h6v4h-6zM200 449h5v4h-5zM263 449h5v4h-5zM300 449h5v4h-5zM411 449h5v4h-5zM474 449h21v4h-21zM559 449h5v4h-5zM105 453h5v5h-5zM226 453h5v5h-5zM268 453h6v5h-6zM395 453h5v5h-5zM416 453h5v5h-5zM458 453h6v5h-6zM474 453h5v5h-5zM538 453h5v5h-5zM258 458h10v5h-10zM284 458h5v5h-5zM300 458h5v5h-5zM332 458h5v5h-5zM390 458h5v5h-5zM427 458h5v5h-5zM485 458h5v5h-5zM506 458h5v5h-5zM538 458h5v5h-5zM147 463h5v5h-5zM400 463h6v5h-6zM432 463h21v5h-21zM490 463h5v5h-5zM532 463h6v5h-6zM120 468h6v5h-6zM131 468h5v5h-5zM226 468h5v5h-5zM252 468h6v5h-6zM274 468h5v5h-5zM289 468h6v5h-6zM305 468h6v5h-6zM421 468h6v5h-6zM443 468h5v5h-5zM458 468h6v5h-6zM532 468h6v5h-6zM99 473h6v4h-6zM168 473h5v4h-5zM231 473h6v4h-6zM311 473h5v4h-5zM416 473h5v4h-5zM448 473h5v4h-5zM469 473h5v4h-5zM527 473h5v4h-5zM173 477h6v5h-6zM210 477h6v5h-6zM231 477h6v5h-6zM279 477h5v5h-5zM305 477h6v5h-6zM321 477h5v5h-5zM501 477h5v5h-5zM105 482h5v5h-5zM131 482h5v5h-5zM305 482h6v5h-6zM406 482h5v5h-5zM469 482h5v5h-5zM516 482h6v5h-6zM110 487h5v5h-5zM126 487h5v5h-5zM157 487h6v5h-6zM216 487h5v5h-5zM411 487h5v5h-5zM448 487h5v5h-5zM485 487h5v5h-5zM136 492h6v4h-6zM163 492h5v4h-5zM289 492h6v4h-6zM443 492h5v4h-5zM474 492h5v4h-5zM495 492h6v4h-6zM120 496h6v5h-6zM189 496h11v5h-11zM221 496h5v5h-5zM237 496h5v5h-5zM252 496h6v5h-6zM300 496h5v5h-5zM379 496h5v5h-5zM421 496h6v5h-6zM469 496h5v5h-5zM485 496h5v5h-5zM131 501h5v5h-5zM258 501h5v5h-5zM300 501h5v5h-5zM421 501h6v5h-6zM443 501h5v5h-5zM485 501h5v5h-5zM136 506h6v5h-6zM184 506h5v5h-5zM205 506h5v5h-5zM237 506h5v5h-5zM247 506h5v5h-5zM458 506h6v5h-6zM120 511h6v5h-6zM205 511h5v5h-5zM300 511h5v5h-5zM400 511h6v5h-6zM464 511h5v5h-5zM147 516h5v4h-5zM189 516h5v4h-5zM247 516h5v4h-5zM358 516h5v4h-5zM284 520h5v5h-5zM369 520h5v5h-5zM384 520h6v5h-6zM464 520h5v5h-5zM105 525h5v5h-5zM311 525h5v5h-5zM347 525h6v5h-6zM379 525h5v5h-5zM390 525h5v5h-5zM416 525h5v5h-5zM94 530h5v5h-5zM120 530h6v5h-6zM189 530h5v5h-5zM216 530h5v5h-5zM237 530h5v5h-5zM252 530h6v5h-6zM263 530h5v5h-5zM289 530h6v5h-6zM400 530h6v5h-6zM437 530h6v5h-6zM110 535h5v4h-5zM131 535h5v4h-5zM157 535h6v4h-6zM179 535h5v4h-5zM205 535h5v4h-5zM300 535h5v4h-5zM321 535h5v4h-5zM347 535h6v4h-6zM416 535h5v4h-5zM115 539h11v5h-11zM247 539h5v5h-5zM358 539h5v5h-5zM390 539h5v5h-5zM421 539h6v5h-6zM168 544h5v5h-5zM189 544h5v5h-5zM205 544h5v5h-5zM216 544h10v5h-10zM268 544h11v5h-11zM295 544h10v5h-10zM332 544h5v5h-5zM379 544h5v5h-5zM94 549h5v5h-5zM226 549h5v5h-5zM295 549h5v5h-5zM311 549h10v5h-10zM358 549h5v5h-5zM400 549h6v5h-6zM99 554h6v5h-6zM136 554h6v5h-6zM163 554h5v5h-5zM231 554h6v5h-6zM247 554h5v5h-5zM311 554h5v5h-5zM374 554h5v5h-5zM395 554h5v5h-5zM316 559h5v4h-5zM374 559h5v4h-5zM126 563h5v5h-5zM152 563h5v5h-5zM205 563h5v5h-5zM279 563h5v5h-5zM311 563h10v5h-10zM379 563h5v5h-5zM411 563h5v5h-5zM131 568h5v5h-5zM168 568h5v5h-5zM189 568h5v5h-5zM231 568h6v5h-6zM321 568h5v5h-5zM363 568h6v5h-6zM395 568h5v5h-5zM147 573h5v5h-5zM258 573h5v5h-5zM279 573h5v5h-5zM295 573h5v5h-5zM332 573h5v5h-5zM379 573h5v5h-5zM94 578h5v4h-5zM184 578h5v4h-5zM279 578h5v4h-5zM105 582h5v5h-5zM136 582h6v5h-6zM163 582h5v5h-5zM210 582h16v5h-16zM279 582h5v5h-5zM300 582h5v5h-5zM316 582h5v5h-5zM332 582h5v5h-5zM347 582h6v5h-6zM358 582h5v5h-5zM369 582h5v5h-5zM131 587h5v5h-5zM184 587h5v5h-5zM210 587h6v5h-6zM221 587h5v5h-5zM247 587h5v5h-5zM295 587h5v5h-5zM363 587h6v5h-6zM105 592h5v5h-5zM168 592h5v5h-5zM189 592h11v5h-11zM216 592h5v5h-5zM226 592h5v5h-5zM242 592h10v5h-10zM263 592h5v5h-5zM284 592h5v5h-5zM311 592h5v5h-5zM332 592h5v5h-5zM99 597h16v5h-16zM120 597h6v5h-6zM163 597h5v5h-5zM194 597h6v5h-6zM237 597h5v5h-5zM258 597h5v5h-5zM284 597h5v5h-5zM353 597h5v5h-5zM168 602h5v4h-5zM179 602h10v4h-10zM237 602h5v4h-5zM263 602h11v4h-11zM305 602h6v4h-6zM147 606h5v5h-5zM163 606h5v5h-5zM216 606h5v5h-5zM226 606h5v5h-5zM237 606h5v5h-5zM115 611h5v5h-5zM136 611h11v5h-11zM200 611h5v5h-5zM268 611h6v5h-6zM305 611h6v5h-6zM347 611h6v5h-6zM99 616h6v5h-6zM136 616h6v5h-6zM184 616h5v5h-5zM216 616h5v5h-5zM247 616h5v5h-5zM258 616h5v5h-5zM268 616h6v5h-6zM311 616h5v5h-5zM105 621h5v5h-5zM131 621h5v5h-5zM179 621h5v5h-5zM332 621h5v5h-5zM120 626h6v4h-6zM147 626h16v4h-16zM216 626h5v4h-5zM231 626h6v4h-6zM258 626h5v4h-5zM268 626h6v4h-6zM295 626h5v4h-5zM136 630h11v5h-11zM242 630h5v5h-5zM115 635h16v5h-16zM279 635h5v5h-5zM305 635h6v5h-6zM210 640h6v5h-6zM221 640h5v5h-5zM147 645h5v4h-5zM194 645h6v4h-6zM274 645h5v4h-5zM136 649h11v5h-11zM99 659h11v5h-11zM136 659h6v5h-6zM194 659h6v5h-6zM210 659h6v5h-6zM237 659h5v5h-5zM268 659h6v5h-6zM105 664h5v5h-5zM142 664h5v5h-5zM163 664h5v5h-5zM99 669h6v4h-6zM115 669h5v4h-5zM126 669h5v4h-5zM179 669h5v4h-5zM237 669h5v4h-5zM173 673h6v5h-6zM194 673h6v5h-6zM242 673h5v5h-5zM94 678h5v5h-5zM163 678h5v5h-5zM173 678h6v5h-6zM221 678h5v5h-5zM242 678h5v5h-5zM94 683h5v5h-5zM115 683h11v5h-11zM142 683h5v5h-5zM173 683h6v5h-6zM231 683h6v5h-6zM142 688h5v4h-5zM110 692h5v5h-5zM194 692h6v5h-6zM205 692h5v5h-5zM194 697h11v5h-11z"/>
<path fill="#65cb5e" d="M226 224h5v5h-5zM274 224h5v5h-5zM384 224h6v5h-6zM395 224h5v5h-5zM516 224h6v5h-6zM168 229h5v5h-5zM205 229h5v5h-5zM326 229h6v5h-6zM448 229h5v5h-5zM427 234h5v4h-5zM464 234h5v4h-5zM258 238h5v5h-5zM384 238h6v5h-6zM242 243h5v5h-5zM305 243h6v5h-6zM432 243h5v5h-5zM464 243h5v5h-5zM221 248h5v5h-5zM464 248h5v5h-5zM205 253h5v4h-5zM263 253h5v4h-5zM406 253h5v4h-5zM157 257h6v5h-6zM184 257h5v5h-5zM216 257h5v5h-5zM506 257h5v5h-5zM221 262h5v5h-5zM289 262h6v5h-6zM326 262h6v5h-6zM443 262h5v5h-5zM506 262h5v5h-5zM527 262h5v5h-5zM120 267h6v5h-6zM168 267h5v5h-5zM421 267h6v5h-6zM501 267h5v5h-5zM194 272h6v5h-6zM231 272h6v5h-6zM289 272h6v5h-6zM305 272h6v5h-6zM131 277h5v4h-5zM200 281h5v5h-5zM231 281h6v5h-6zM384 281h6v5h-6zM516 281h6v5h-6zM506 286h5v5h-5zM543 291h10v5h-10zM569 291h5v5h-5zM200 296h5v4h-5zM247 296h5v4h-5zM427 296h5v4h-5zM443 296h5v4h-5zM490 296h5v4h-5zM569 296h5v4h-5zM384 300h6v5h-6zM437 300h6v5h-6zM501 300h5v5h-5zM564 300h5v5h-5zM99 305h6v5h-6zM247 305h5v5h-5zM274 305h5v5h-5zM395 305h5v5h-5zM469 305h5v5h-5zM490 305h5v5h-5zM321 310h5v5h-5zM379 310h5v5h-5zM469 310h5v5h-5zM495 310h6v5h-6zM516 310h6v5h-6zM110 315h5v5h-5zM152 315h5v5h-5zM126 320h10v4h-10zM157 320h6v4h-6zM427 320h5v4h-5zM316 324h5v5h-5zM363 324h6v5h-6zM432 324h5v5h-5zM543 324h5v5h-5zM152 329h5v5h-5zM179 329h5v5h-5zM458 329h6v5h-6zM569 329h5v5h-5zM99 334h6v5h-6zM115 334h5v5h-5zM400 334h6v5h-6zM490 334h5v5h-5zM601 334h5v5h-5zM163 339h5v4h-5zM226 339h5v4h-5zM374 339h5v4h-5zM453 339h5v4h-5zM516 339h6v4h-6zM527 339h5v4h-5zM585 339h5v4h-5zM437 343h6v5h-6zM522 343h5v5h-5zM543 343h5v5h-5zM559 343h5v5h-5zM559 348h10v5h-10zM596 348h5v5h-5zM216 353h5v5h-5zM390 353h10v5h-10zM543 353h5v5h-5zM274 358h5v5h-5zM347 358h6v5h-6zM506 358h5v5h-5zM516 358h6v5h-6zM559 358h5v5h-5zM590 358h6v5h-6zM99 363h6v4h-6zM163 363h5v4h-5zM268 363h6v4h-6zM416 363h5v4h-5zM437 363h6v4h-6zM522 363h5v4h-5zM131 367h5v5h-5zM226 367h5v5h-5zM274 367h5v5h-5zM390 367h5v5h-5zM448 367h5v5h-5zM501 367h5v5h-5zM596 367h5v5h-5zM147 372h5v5h-5zM326 372h6v5h-6zM416 372h11v5h-11zM474 372h11v5h-11zM511 372h5v5h-5zM559 372h5v5h-5zM136 377h6v5h-6zM226 377h5v5h-5zM311 377h5v5h-5zM543 377h5v5h-5zM606 377h5v5h-5zM189 382h5v5h-5zM221 382h5v5h-5zM300 382h5v5h-5zM358 382h5v5h-5zM464 382h5v5h-5zM479 382h6v5h-6zM522 382h5v5h-5zM532 382h6v5h-6zM559 382h5v5h-5zM105 387h10v4h-10zM363 387h6v4h-6zM495 387h6v4h-6zM590 387h6v4h-6zM99 391h11v5h-11zM416 391h5v5h-5zM437 391h6v5h-6zM448 391h5v5h-5zM284 396h5v5h-5zM295 396h5v5h-5zM332 396h5v5h-5zM421 396h6v5h-6zM448 396h5v5h-5zM147 401h5v5h-5zM384 401h11v5h-11zM453 401h5v5h-5zM110 406h5v4h-5zM173 406h6v4h-6zM263 406h5v4h-5zM311 406h5v4h-5zM406 406h5v4h-5zM421 406h11v4h-11zM490 406h5v4h-5zM506 406h5v4h-5zM569 406h5v4h-5zM596 406h5v4h-5zM184 410h5v5h-5zM200 410h5v5h-5zM268 410h6v5h-6zM374 410h5v5h-5zM485 410h5v5h-5zM495 410h6v5h-6zM511 410h5v5h-5zM163 415h5v5h-5zM353 415h5v5h-5zM416 415h5v5h-5zM443 415h5v5h-5zM469 415h5v5h-5zM516 415h6v5h-6zM347 420h6v5h-6zM395 420h5v5h-5zM490 420h5v5h-5zM522 420h5v5h-5zM532 420h6v5h-6zM569 420h5v5h-5zM115 425h5v5h-5zM131 425h5v5h-5zM274 425h5v5h-5zM390 425h5v5h-5zM400 425h6v5h-6zM421 425h6v5h-6zM474 425h5v5h-5zM115 430h5v4h-5zM379 430h5v4h-5zM421 430h6v4h-6zM432 430h5v4h-5zM474 430h5v4h-5zM511 430h5v4h-5zM390 434h5v5h-5zM437 434h6v5h-6zM448 434h5v5h-5zM479 434h11v5h-11zM163 439h5v5h-5zM173 439h6v5h-6zM205 439h5v5h-5zM390 439h5v5h-5zM416 439h5v5h-5zM216 444h5v5h-5zM263 444h5v5h-5zM358 444h5v5h-5zM416 444h16v5h-16zM163 449h5v4h-5zM374 449h5v4h-5zM316 453h5v5h-5zM384 453h6v5h-6zM464 453h5v5h-5zM506 453h5v5h-5zM115 458h5v5h-5zM437 458h6v5h-6zM448 458h5v5h-5zM469 458h5v5h-5zM501 458h5v5h-5zM216 463h5v5h-5zM311 463h5v5h-5zM411 463h5v5h-5zM474 463h5v5h-5zM179 468h5v5h-5zM332 468h5v5h-5zM485 468h5v5h-5zM516 468h6v5h-6zM136 473h11v4h-11zM268 473h6v4h-6zM400 473h6v4h-6zM126 477h5v5h-5zM237 477h5v5h-5zM390 477h5v5h-5zM152 482h5v5h-5zM200 482h5v5h-5zM289 482h6v5h-6zM443 482h5v5h-5zM458 482h6v5h-6zM506 482h5v5h-5zM147 487h5v5h-5zM284 487h5v5h-5zM321 487h5v5h-5zM384 487h11v5h-11zM247 492h5v4h-5zM379 492h5v4h-5zM416 492h5v4h-5zM311 496h5v5h-5zM400 496h6v5h-6zM416 496h5v5h-5zM464 496h5v5h-5zM474 496h5v5h-5zM110 501h5v5h-5zM369 501h5v5h-5zM163 506h5v5h-5zM274 506h5v5h-5zM379 506h5v5h-5zM443 506h5v5h-5zM242 511h5v5h-5zM311 511h21v5h-21zM374 511h5v5h-5zM390 511h5v5h-5zM416 511h5v5h-5zM432 511h5v5h-5zM443 511h5v5h-5zM458 511h6v5h-6zM194 516h6v4h-6zM421 516h6v4h-6zM458 516h6v4h-6zM300 520h5v5h-5zM342 520h5v5h-5zM379 520h5v5h-5zM395 520h11v5h-11zM142 525h5v5h-5zM189 525h11v5h-11zM332 525h5v5h-5zM395 525h5v5h-5zM147 530h5v5h-5zM194 530h6v5h-6zM242 530h5v5h-5zM295 530h5v5h-5zM305 530h6v5h-6zM342 530h5v5h-5zM231 535h6v4h-6zM247 535h5v4h-5zM305 535h6v4h-6zM326 535h6v4h-6zM358 535h5v4h-5zM411 535h5v4h-5zM173 539h6v5h-6zM184 539h5v5h-5zM210 539h6v5h-6zM279 539h5v5h-5zM326 539h11v5h-11zM411 539h5v5h-5zM163 544h5v5h-5zM231 544h6v5h-6zM305 544h6v5h-6zM432 544h5v5h-5zM120 549h6v5h-6zM179 549h5v5h-5zM216 549h5v5h-5zM231 549h6v5h-6zM289 549h6v5h-6zM342 549h5v5h-5zM390 549h5v5h-5zM406 549h5v5h-5zM421 549h6v5h-6zM295 554h5v5h-5zM326 554h6v5h-6zM406 554h5v5h-5zM289 559h16v4h-16zM337 559h5v4h-5zM353 559h5v4h-5zM284 563h5v5h-5zM295 563h5v5h-5zM400 563h6v5h-6zM247 568h11v5h-11zM268 568h6v5h-6zM353 568h5v5h-5zM110 573h5v5h-5zM120 573h6v5h-6zM131 573h5v5h-5zM274 573h5v5h-5zM390 573h5v5h-5zM99 578h6v4h-6zM210 578h6v4h-6zM274 578h5v4h-5zM194 582h11v5h-11zM252 582h6v5h-6zM173 587h6v5h-6zM226 587h5v5h-5zM274 587h5v5h-5zM252 597h6v5h-6zM126 602h5v4h-5zM136 602h6v4h-6zM147 602h5v4h-5zM284 602h11v4h-11zM115 606h5v5h-5zM131 606h5v5h-5zM332 606h5v5h-5zM173 611h6v5h-6zM194 611h6v5h-6zM226 611h5v5h-5zM126 621h5v5h-5zM205 621h5v5h-5zM295 621h5v5h-5zM136 626h6v4h-6zM289 626h6v4h-6zM189 635h5v5h-5zM300 635h5v5h-5zM200 640h5v5h-5zM258 640h5v5h-5zM226 649h5v5h-5zM210 654h6v5h-6zM247 654h5v5h-5zM200 659h5v5h-5zM231 659h6v5h-6zM258 659h5v5h-5zM131 664h5v5h-5zM189 664h5v5h-5zM237 664h5v5h-5zM142 669h5v4h-5zM168 669h5v4h-5zM184 669h5v4h-5zM120 673h6v5h-6zM136 673h6v5h-6zM216 673h5v5h-5zM247 673h5v5h-5zM126 678h5v5h-5zM136 678h6v5h-6zM179 678h5v5h-5zM216 683h5v5h-5zM110 688h16v4h-16zM152 688h5v4h-5zM142 692h5v5h-5zM226 692h5v5h-5zM131 697h5v5h-5zM184 697h5v5h-5zM216 697h5v5h-5z"/>
<path fill="#44bf70" d="M369 224h5v5h-5zM390 224h5v5h-5zM411 224h5v5h-5zM511 224h5v5h-5zM274 229h5v5h-5zM443 229h5v5h-5zM485 229h5v5h-5zM511 229h5v5h-5zM237 238h5v5h-5zM448 238h5v5h-5zM120 243h6v5h-6zM332 243h5v5h-5zM516 243h6v5h-6zM532 243h6v5h-6zM105 248h5v5h-5zM157 248h6v5h-6zM384 248h6v5h-6zM501 248h5v5h-5zM363 253h6v4h-6zM443 253h5v4h-5zM479 253h6v4h-6zM316 257h5v5h-5zM469 257h5v5h-5zM363 262h6v5h-6zM400 262h6v5h-6zM94 267h5v5h-5zM247 267h5v5h-5zM115 272h5v5h-5zM136 272h11v5h-11zM432 272h11v5h-11zM448 272h5v5h-5zM548 272h5v5h-5zM564 272h5v5h-5zM105 277h5v4h-5zM237 277h5v4h-5zM252 277h6v4h-6zM305 277h6v4h-6zM152 281h5v5h-5zM358 281h5v5h-5zM99 286h6v5h-6zM131 286h11v5h-11zM157 286h6v5h-6zM289 286h6v5h-6zM406 286h5v5h-5zM464 286h5v5h-5zM131 291h5v5h-5zM168 291h5v5h-5zM247 291h5v5h-5zM416 291h5v5h-5zM400 296h6v4h-6zM421 296h6v4h-6zM432 296h5v4h-5zM453 300h5v5h-5zM548 305h5v5h-5zM300 310h5v5h-5zM311 310h5v5h-5zM337 310h5v5h-5zM511 310h5v5h-5zM574 310h6v5h-6zM289 315h6v5h-6zM390 315h5v5h-5zM427 315h5v5h-5zM458 315h6v5h-6zM110 320h5v4h-5zM179 320h5v4h-5zM321 320h5v4h-5zM374 320h5v4h-5zM590 320h6v4h-6zM617 320h5v4h-5zM342 324h5v5h-5zM553 324h6v5h-6zM147 329h5v5h-5zM411 334h5v5h-5zM427 334h5v5h-5zM448 334h5v5h-5zM501 334h5v5h-5zM527 334h5v5h-5zM99 339h6v4h-6zM231 339h6v4h-6zM326 339h6v4h-6zM358 339h5v4h-5zM379 339h5v4h-5zM432 339h5v4h-5zM522 339h5v4h-5zM136 343h6v5h-6zM157 343h6v5h-6zM284 348h5v5h-5zM617 348h5v5h-5zM194 353h6v5h-6zM379 353h5v5h-5zM427 353h5v5h-5zM136 358h6v5h-6zM163 358h5v5h-5zM390 358h5v5h-5zM596 358h5v5h-5zM105 363h5v4h-5zM115 363h11v4h-11zM337 363h5v4h-5zM559 363h5v4h-5zM379 367h5v5h-5zM395 367h5v5h-5zM184 372h5v5h-5zM585 372h5v5h-5zM596 372h5v5h-5zM606 372h5v5h-5zM152 377h5v5h-5zM263 377h5v5h-5zM274 377h5v5h-5zM590 377h6v5h-6zM617 377h5v5h-5zM173 382h6v5h-6zM527 382h5v5h-5zM601 382h5v5h-5zM369 387h5v4h-5zM464 387h5v4h-5zM501 387h5v4h-5zM189 391h5v5h-5zM200 391h5v5h-5zM216 391h5v5h-5zM316 391h5v5h-5zM601 391h5v5h-5zM263 396h5v5h-5zM311 396h5v5h-5zM495 396h6v5h-6zM136 401h6v5h-6zM210 401h6v5h-6zM221 401h5v5h-5zM369 401h5v5h-5zM131 406h5v4h-5zM258 406h5v4h-5zM358 406h5v4h-5zM400 406h6v4h-6zM443 406h5v4h-5zM574 406h6v4h-6zM242 410h5v5h-5zM443 410h5v5h-5zM501 410h5v5h-5zM527 410h5v5h-5zM553 410h6v5h-6zM168 415h5v5h-5zM369 415h5v5h-5zM94 420h5v5h-5zM126 420h5v5h-5zM157 420h6v5h-6zM274 420h5v5h-5zM326 420h6v5h-6zM458 420h6v5h-6zM131 430h5v4h-5zM242 430h5v4h-5zM295 430h5v4h-5zM390 430h5v4h-5zM448 430h5v4h-5zM548 430h5v4h-5zM179 434h5v5h-5zM200 434h5v5h-5zM274 434h5v5h-5zM527 434h5v5h-5zM553 434h6v5h-6zM569 434h5v5h-5zM136 439h6v5h-6zM194 439h6v5h-6zM295 439h5v5h-5zM321 439h5v5h-5zM332 439h10v5h-10zM448 444h5v5h-5zM506 444h5v5h-5zM464 449h5v4h-5zM532 449h6v4h-6zM548 449h5v4h-5zM379 453h5v5h-5zM411 453h5v5h-5zM152 458h5v5h-5zM200 463h5v5h-5zM284 463h5v5h-5zM110 468h5v5h-5zM300 468h5v5h-5zM527 468h5v5h-5zM543 468h5v5h-5zM110 473h5v4h-5zM279 473h5v4h-5zM421 473h6v4h-6zM184 477h5v5h-5zM479 477h6v5h-6zM94 482h5v5h-5zM126 482h5v5h-5zM205 482h5v5h-5zM231 482h6v5h-6zM390 482h5v5h-5zM495 487h6v5h-6zM479 492h6v4h-6zM210 496h6v5h-6zM279 496h5v5h-5zM305 496h6v5h-6zM184 501h5v5h-5zM289 501h6v5h-6zM115 506h5v5h-5zM210 506h6v5h-6zM263 506h5v5h-5zM416 506h5v5h-5zM479 511h6v5h-6zM120 516h6v4h-6zM152 516h5v4h-5zM147 520h5v5h-5zM279 520h5v5h-5zM147 525h5v5h-5zM400 525h6v5h-6zM221 530h5v5h-5zM432 530h5v5h-5zM173 535h6v4h-6zM284 535h5v4h-5zM337 535h5v4h-5zM406 535h5v4h-5zM157 539h6v5h-6zM263 539h5v5h-5zM369 539h5v5h-5zM437 539h6v5h-6zM136 544h6v5h-6zM173 544h6v5h-6zM427 544h5v5h-5zM168 549h5v5h-5zM205 549h5v5h-5zM252 549h6v5h-6zM115 554h5v5h-5zM157 554h6v5h-6zM173 554h6v5h-6zM136 559h6v4h-6zM157 559h6v4h-6zM210 559h6v4h-6zM305 559h11v4h-11zM363 563h6v5h-6zM94 568h5v5h-5zM400 568h6v5h-6zM168 573h5v5h-5zM157 578h6v4h-6zM252 578h6v4h-6zM115 582h5v5h-5zM353 582h5v5h-5zM258 587h10v5h-10zM126 592h5v5h-5zM184 592h5v5h-5zM252 592h6v5h-6zM369 592h5v5h-5zM157 597h6v5h-6zM210 597h6v5h-6zM242 597h5v5h-5zM289 597h6v5h-6zM326 597h6v5h-6zM152 602h5v4h-5zM231 602h6v4h-6zM252 602h6v4h-6zM142 606h5v5h-5zM179 606h5v5h-5zM194 606h6v5h-6zM242 606h5v5h-5zM94 611h11v5h-11zM284 616h5v5h-5zM189 621h5v5h-5zM200 621h5v5h-5zM231 621h6v5h-6zM210 626h6v4h-6zM173 630h6v5h-6zM205 630h5v5h-5zM258 635h5v5h-5zM279 640h5v5h-5zM152 645h5v4h-5zM173 649h6v5h-6zM258 649h5v5h-5zM168 654h5v5h-5zM152 659h5v5h-5zM173 659h6v5h-6zM194 669h6v4h-6zM94 673h11v5h-11zM131 673h5v5h-5zM168 673h5v5h-5zM110 678h5v5h-5zM200 678h5v5h-5zM210 678h6v5h-6zM163 683h5v5h-5zM179 683h5v5h-5zM231 688h6v4h-6zM152 692h5v5h-5z"/>
<path fill="#73d056" d="M105 229h5v5h-5zM390 229h5v5h-5zM490 229h5v5h-5zM448 243h5v5h-5zM400 248h6v5h-6zM142 257h5v5h-5zM485 262h5v5h-5zM221 267h5v5h-5zM284 272h5v5h-5zM495 272h6v5h-6zM147 277h5v4h-5zM437 281h6v5h-6zM569 281h5v5h-5zM448 286h5v5h-5zM237 291h5v5h-5zM363 291h6v5h-6zM342 296h5v4h-5zM516 300h6v5h-6zM527 300h5v5h-5zM553 300h6v5h-6zM443 305h5v5h-5zM501 305h15v5h-15zM538 305h5v5h-5zM173 310h6v5h-6zM411 315h5v5h-5zM501 315h5v5h-5zM516 315h6v5h-6zM532 315h6v5h-6zM263 324h5v5h-5zM337 329h5v5h-5zM432 329h5v5h-5zM453 329h5v5h-5zM548 329h5v5h-5zM126 334h5v5h-5zM369 334h5v5h-5zM580 334h5v5h-5zM115 339h5v4h-5zM247 339h5v4h-5zM126 343h5v5h-5zM194 343h6v5h-6zM347 348h6v5h-6zM305 353h6v5h-6zM511 353h5v5h-5zM569 353h5v5h-5zM596 353h5v5h-5zM411 358h5v5h-5zM427 367h5v5h-5zM453 367h5v5h-5zM458 372h6v5h-6zM495 372h6v5h-6zM163 377h5v5h-5zM332 377h5v5h-5zM416 377h5v5h-5zM427 377h5v5h-5zM501 377h5v5h-5zM458 382h6v5h-6zM611 382h6v5h-6zM131 387h5v4h-5zM406 387h5v4h-5zM538 387h5v4h-5zM564 387h5v4h-5zM305 391h6v5h-6zM485 391h5v5h-5zM501 391h5v5h-5zM189 396h5v5h-5zM479 396h6v5h-6zM559 396h5v5h-5zM179 401h5v5h-5zM416 401h11v5h-11zM126 406h5v4h-5zM189 406h5v4h-5zM395 406h5v4h-5zM511 406h11v4h-11zM585 406h5v4h-5zM606 406h5v4h-5zM448 410h5v5h-5zM311 415h5v5h-5zM406 420h5v5h-5zM416 420h5v5h-5zM437 420h6v5h-6zM564 420h5v5h-5zM332 425h5v5h-5zM374 430h5v4h-5zM406 430h5v4h-5zM437 430h11v4h-11zM580 434h5v5h-5zM242 439h5v5h-5zM538 439h5v5h-5zM295 444h5v5h-5zM384 444h6v5h-6zM395 444h5v5h-5zM548 444h5v5h-5zM347 449h6v4h-6zM369 449h5v4h-5zM379 449h5v4h-5zM390 449h5v4h-5zM406 449h5v4h-5zM564 449h5v4h-5zM289 453h6v5h-6zM353 453h5v5h-5zM406 453h5v5h-5zM516 453h6v5h-6zM311 458h5v5h-5zM342 458h5v5h-5zM395 458h5v5h-5zM443 458h5v5h-5zM490 458h5v5h-5zM384 463h16v5h-16zM464 463h5v5h-5zM495 463h6v5h-6zM94 468h5v5h-5zM321 468h5v5h-5zM337 468h5v5h-5zM469 468h5v5h-5zM194 473h6v4h-6zM326 473h6v4h-6zM379 473h16v4h-16zM437 473h6v4h-6zM216 477h5v5h-5zM379 477h5v5h-5zM311 482h10v5h-10zM395 482h5v5h-5zM416 482h5v5h-5zM326 487h6v5h-6zM311 492h5v4h-5zM321 492h5v4h-5zM374 492h5v4h-5zM384 492h6v4h-6zM485 492h5v4h-5zM316 496h5v5h-5zM237 501h5v5h-5zM384 501h11v5h-11zM448 501h5v5h-5zM189 506h5v5h-5zM300 506h5v5h-5zM347 506h6v5h-6zM179 511h5v5h-5zM295 511h5v5h-5zM337 511h5v5h-5zM163 516h5v4h-5zM231 516h6v4h-6zM295 516h5v4h-5zM305 516h11v4h-11zM332 516h5v4h-5zM347 516h6v4h-6zM363 516h6v4h-6zM168 520h5v5h-5zM337 520h5v5h-5zM358 520h5v5h-5zM411 520h10v5h-10zM448 520h5v5h-5zM427 525h5v5h-5zM247 530h5v5h-5zM332 530h5v5h-5zM142 535h5v4h-5zM289 535h6v4h-6zM332 535h5v4h-5zM353 535h5v4h-5zM216 539h5v5h-5zM274 539h5v5h-5zM400 539h6v5h-6zM358 544h5v5h-5zM369 544h5v5h-5zM406 544h5v5h-5zM126 549h5v5h-5zM184 549h5v5h-5zM347 549h6v5h-6zM274 554h5v5h-5zM369 559h5v4h-5zM163 568h5v5h-5zM221 578h5v4h-5zM305 578h6v4h-6zM157 587h6v5h-6zM142 592h5v5h-5zM157 592h6v5h-6zM231 597h6v5h-6zM295 597h5v5h-5zM110 602h5v4h-5zM279 606h5v5h-5zM311 606h5v5h-5zM337 606h5v5h-5zM152 621h5v5h-5zM300 626h5v4h-5zM274 630h5v5h-5zM131 635h5v5h-5zM120 640h6v5h-6zM252 640h6v5h-6zM126 649h10v5h-10zM221 649h5v5h-5zM147 654h5v5h-5zM142 659h5v5h-5zM110 664h5v5h-5zM157 664h6v5h-6zM179 664h5v5h-5zM226 664h5v5h-5zM205 678h5v5h-5zM221 692h5v5h-5zM157 697h6v5h-6z"/>
<path fill="#6ccd5a" d="M136 229h6v5h-6zM200 229h5v5h-5zM221 229h5v5h-5zM263 229h5v5h-5zM347 229h6v5h-6zM163 234h5v4h-5zM363 234h6v4h-6zM379 234h5v4h-5zM263 243h5v5h-5zM379 243h5v5h-5zM421 243h6v5h-6zM184 248h5v5h-5zM416 248h5v5h-5zM427 248h5v5h-5zM437 248h6v5h-6zM168 253h5v4h-5zM274 253h5v4h-5zM358 253h5v4h-5zM527 253h5v4h-5zM464 257h5v5h-5zM495 257h11v5h-11zM216 262h5v5h-5zM453 262h11v5h-11zM532 262h6v5h-6zM532 267h6v5h-6zM469 272h5v5h-5zM485 272h5v5h-5zM311 277h5v4h-5zM474 281h5v5h-5zM237 286h5v5h-5zM427 286h10v5h-10zM548 286h5v5h-5zM99 291h6v5h-6zM163 291h5v5h-5zM210 291h6v5h-6zM400 291h6v5h-6zM411 291h5v5h-5zM448 291h5v5h-5zM543 296h5v4h-5zM226 300h5v5h-5zM237 300h5v5h-5zM443 300h10v5h-10zM495 300h6v5h-6zM511 300h5v5h-5zM559 300h5v5h-5zM189 305h5v5h-5zM226 305h5v5h-5zM105 310h5v5h-5zM247 310h5v5h-5zM400 310h6v5h-6zM464 310h5v5h-5zM559 310h5v5h-5zM580 310h10v5h-10zM596 310h5v5h-5zM200 315h5v5h-5zM479 315h6v5h-6zM216 320h5v4h-5zM295 320h10v4h-10zM316 320h5v4h-5zM395 320h5v4h-5zM479 320h6v4h-6zM506 320h5v4h-5zM258 324h5v5h-5zM400 324h6v5h-6zM427 324h5v5h-5zM548 324h5v5h-5zM564 324h5v5h-5zM311 329h5v5h-5zM421 329h6v5h-6zM495 329h6v5h-6zM543 329h5v5h-5zM268 334h6v5h-6zM347 334h6v5h-6zM443 334h5v5h-5zM553 334h6v5h-6zM564 334h5v5h-5zM110 339h5v4h-5zM189 339h5v4h-5zM279 339h5v4h-5zM305 339h6v4h-6zM437 339h6v4h-6zM464 339h5v4h-5zM501 339h5v4h-5zM569 339h5v4h-5zM617 339h5v4h-5zM115 343h5v5h-5zM205 343h5v5h-5zM590 343h6v5h-6zM432 348h5v5h-5zM538 348h5v5h-5zM580 348h5v5h-5zM168 353h5v5h-5zM210 353h6v5h-6zM237 353h5v5h-5zM332 353h5v5h-5zM374 353h5v5h-5zM384 353h6v5h-6zM538 353h5v5h-5zM548 353h5v5h-5zM580 353h5v5h-5zM152 358h5v5h-5zM379 358h5v5h-5zM432 358h5v5h-5zM490 358h5v5h-5zM564 358h5v5h-5zM574 358h6v5h-6zM279 363h5v4h-5zM390 363h5v4h-5zM443 363h5v4h-5zM469 363h5v4h-5zM511 363h5v4h-5zM432 367h16v5h-16zM527 367h5v5h-5zM590 367h6v5h-6zM617 367h5v5h-5zM136 372h6v5h-6zM406 372h5v5h-5zM506 372h5v5h-5zM548 372h5v5h-5zM574 372h6v5h-6zM437 377h6v5h-6zM490 377h5v5h-5zM506 377h5v5h-5zM559 377h5v5h-5zM115 382h5v5h-5zM384 382h6v5h-6zM501 382h5v5h-5zM511 382h5v5h-5zM416 387h5v4h-5zM432 387h5v4h-5zM527 387h5v4h-5zM585 387h5v4h-5zM596 387h5v4h-5zM147 391h5v5h-5zM279 391h5v5h-5zM384 391h6v5h-6zM453 391h5v5h-5zM469 391h5v5h-5zM479 391h6v5h-6zM532 391h6v5h-6zM126 396h5v5h-5zM237 396h10v5h-10zM390 396h5v5h-5zM458 396h6v5h-6zM527 396h5v5h-5zM548 396h5v5h-5zM585 396h5v5h-5zM94 401h5v5h-5zM358 401h5v5h-5zM469 401h10v5h-10zM506 401h5v5h-5zM553 401h6v5h-6zM606 401h5v5h-5zM147 406h5v4h-5zM274 406h5v4h-5zM289 406h6v4h-6zM384 406h6v4h-6zM474 406h5v4h-5zM543 406h10v4h-10zM559 406h5v4h-5zM580 406h5v4h-5zM131 410h5v5h-5zM263 410h5v5h-5zM279 410h5v5h-5zM379 410h5v5h-5zM421 410h6v5h-6zM506 410h5v5h-5zM210 415h6v5h-6zM247 415h5v5h-5zM279 415h5v5h-5zM495 415h6v5h-6zM522 415h5v5h-5zM548 415h5v5h-5zM590 415h6v5h-6zM231 420h6v5h-6zM390 420h5v5h-5zM400 420h6v5h-6zM411 420h5v5h-5zM147 425h5v5h-5zM347 425h6v5h-6zM395 425h5v5h-5zM411 425h5v5h-5zM443 425h5v5h-5zM516 425h6v5h-6zM538 425h5v5h-5zM163 430h5v4h-5zM342 430h5v4h-5zM384 430h6v4h-6zM237 434h5v5h-5zM279 434h5v5h-5zM316 434h5v5h-5zM358 434h5v5h-5zM379 434h5v5h-5zM406 434h5v5h-5zM421 434h6v5h-6zM453 434h5v5h-5zM469 434h5v5h-5zM501 434h5v5h-5zM247 439h5v5h-5zM374 439h16v5h-16zM427 439h5v5h-5zM448 439h5v5h-5zM506 439h5v5h-5zM105 444h5v5h-5zM289 444h6v5h-6zM353 444h5v5h-5zM105 449h5v4h-5zM157 449h6v4h-6zM194 449h6v4h-6zM289 449h6v4h-6zM337 449h5v4h-5zM353 449h5v4h-5zM469 449h5v4h-5zM321 453h5v5h-5zM332 453h10v5h-10zM390 453h5v5h-5zM200 458h5v5h-5zM374 458h10v5h-10zM400 458h6v5h-6zM416 458h5v5h-5zM543 458h5v5h-5zM258 463h5v5h-5zM326 463h16v5h-16zM406 463h5v5h-5zM516 463h6v5h-6zM527 463h5v5h-5zM136 468h6v5h-6zM200 468h5v5h-5zM432 468h5v5h-5zM501 468h5v5h-5zM321 473h5v4h-5zM427 473h5v4h-5zM443 473h5v4h-5zM274 477h5v5h-5zM400 477h6v5h-6zM522 477h5v5h-5zM247 482h5v5h-5zM300 482h5v5h-5zM384 482h6v5h-6zM279 487h5v5h-5zM305 487h6v5h-6zM395 487h5v5h-5zM427 487h5v5h-5zM126 492h5v4h-5zM200 492h5v4h-5zM184 496h5v5h-5zM289 496h6v5h-6zM384 496h6v5h-6zM437 496h11v5h-11zM501 496h5v5h-5zM147 501h5v5h-5zM321 501h5v5h-5zM142 506h5v5h-5zM152 506h5v5h-5zM358 506h11v5h-11zM384 506h6v5h-6zM400 506h6v5h-6zM427 506h5v5h-5zM485 506h5v5h-5zM115 511h5v5h-5zM226 511h11v5h-11zM358 511h5v5h-5zM369 511h5v5h-5zM184 516h5v4h-5zM210 516h6v4h-6zM237 516h5v4h-5zM316 516h5v4h-5zM353 516h5v4h-5zM369 516h5v4h-5zM390 516h5v4h-5zM406 516h5v4h-5zM416 516h5v4h-5zM443 516h5v4h-5zM205 520h5v5h-5zM305 520h6v5h-6zM353 520h5v5h-5zM152 525h5v5h-5zM247 525h5v5h-5zM353 525h5v5h-5zM432 525h5v5h-5zM173 530h6v5h-6zM316 530h5v5h-5zM94 535h5v4h-5zM152 535h5v4h-5zM237 535h5v4h-5zM274 535h5v4h-5zM316 535h5v4h-5zM163 539h5v5h-5zM189 539h5v5h-5zM289 539h6v5h-6zM353 539h5v5h-5zM379 539h5v5h-5zM99 544h11v5h-11zM258 544h5v5h-5zM390 544h5v5h-5zM421 544h6v5h-6zM200 549h5v5h-5zM247 549h5v5h-5zM284 549h5v5h-5zM147 554h5v5h-5zM305 554h6v5h-6zM316 554h5v5h-5zM342 554h5v5h-5zM379 554h5v5h-5zM120 559h6v4h-6zM131 559h5v4h-5zM173 559h6v4h-6zM279 559h5v4h-5zM384 559h6v4h-6zM147 563h5v5h-5zM242 563h10v5h-10zM274 563h5v5h-5zM326 563h6v5h-6zM337 563h5v5h-5zM136 568h11v5h-11zM152 568h5v5h-5zM221 568h5v5h-5zM279 568h5v5h-5zM295 568h5v5h-5zM316 568h5v5h-5zM390 568h5v5h-5zM205 573h5v5h-5zM216 573h5v5h-5zM263 573h5v5h-5zM289 573h6v5h-6zM369 573h5v5h-5zM263 578h5v4h-5zM321 578h5v4h-5zM120 582h6v5h-6zM147 582h10v5h-10zM274 582h5v5h-5zM105 587h5v5h-5zM311 587h5v5h-5zM347 587h6v5h-6zM94 592h5v5h-5zM147 592h5v5h-5zM274 592h5v5h-5zM295 592h5v5h-5zM152 597h5v5h-5zM179 597h5v5h-5zM189 597h5v5h-5zM247 597h5v5h-5zM337 597h5v5h-5zM200 602h5v4h-5zM216 602h5v4h-5zM247 602h5v4h-5zM258 602h5v4h-5zM311 602h5v4h-5zM184 606h5v5h-5zM205 606h5v5h-5zM252 606h6v5h-6zM289 606h6v5h-6zM105 611h5v5h-5zM284 611h11v5h-11zM105 616h5v5h-5zM131 616h5v5h-5zM157 616h6v5h-6zM189 616h5v5h-5zM221 616h5v5h-5zM321 616h11v5h-11zM94 621h5v5h-5zM168 621h5v5h-5zM99 626h6v4h-6zM247 626h5v4h-5zM274 626h5v4h-5zM237 630h5v5h-5zM247 630h5v5h-5zM210 635h6v5h-6zM105 640h5v5h-5zM136 640h6v5h-6zM263 640h5v5h-5zM289 640h6v5h-6zM168 645h5v4h-5zM105 649h5v5h-5zM242 649h10v5h-10zM99 654h6v5h-6zM131 654h5v5h-5zM221 654h5v5h-5zM131 659h5v5h-5zM184 659h5v5h-5zM99 664h6v5h-6zM152 669h5v4h-5zM163 669h5v4h-5zM221 669h5v4h-5zM105 678h5v5h-5zM216 678h5v5h-5zM105 683h5v5h-5zM200 688h5v4h-5zM126 692h5v5h-5zM173 692h6v5h-6zM216 692h5v5h-5z"/>
<path fill="#7ad151" d="M242 234h5v4h-5zM221 238h5v5h-5zM136 243h6v5h-6zM247 253h5v4h-5zM337 253h5v4h-5zM495 262h6v5h-6zM559 277h5v4h-5zM564 281h5v5h-5zM538 286h5v5h-5zM490 300h5v5h-5zM279 310h5v5h-5zM136 324h6v5h-6zM295 324h5v5h-5zM458 324h6v5h-6zM479 324h6v5h-6zM501 329h5v5h-5zM617 334h5v5h-5zM421 348h6v5h-6zM574 348h6v5h-6zM564 353h5v5h-5zM474 358h5v5h-5zM580 358h5v5h-5zM184 377h5v5h-5zM469 377h5v5h-5zM411 382h5v5h-5zM580 387h5v4h-5zM411 401h5v5h-5zM585 401h5v5h-5zM157 415h6v5h-6zM284 415h5v5h-5zM580 415h5v5h-5zM427 420h5v5h-5zM406 425h5v5h-5zM453 425h5v5h-5zM326 430h6v4h-6zM432 434h5v5h-5zM263 439h5v5h-5zM559 439h5v5h-5zM342 444h5v5h-5zM363 444h6v5h-6zM390 444h5v5h-5zM437 444h6v5h-6zM511 444h5v5h-5zM384 449h6v4h-6zM427 449h5v4h-5zM543 449h5v4h-5zM342 453h5v5h-5zM374 453h5v5h-5zM279 458h5v5h-5zM289 458h6v5h-6zM353 458h5v5h-5zM384 458h6v5h-6zM421 463h6v5h-6zM332 473h5v4h-5zM506 473h5v4h-5zM311 487h5v5h-5zM379 487h5v5h-5zM332 492h5v4h-5zM369 492h5v4h-5zM115 501h5v5h-5zM353 501h16v5h-16zM406 501h5v5h-5zM311 506h10v5h-10zM342 511h5v5h-5zM321 516h11v4h-11zM337 516h10v4h-10zM316 520h5v5h-5zM332 520h5v5h-5zM316 525h5v5h-5zM326 525h6v5h-6zM342 525h5v5h-5zM347 530h6v5h-6zM363 535h6v4h-6zM432 539h5v5h-5zM305 549h6v5h-6zM126 559h5v4h-5zM289 563h6v5h-6zM305 563h6v5h-6zM342 563h5v5h-5zM305 573h6v5h-6zM347 578h6v4h-6zM252 587h6v5h-6zM326 592h6v5h-6zM326 611h6v5h-6zM221 688h5v4h-5zM226 697h5v5h-5z"/>
<path fill="#84d44b" d="M342 248h5v5h-5zM553 310h6v5h-6zM469 329h5v5h-5zM411 430h5v4h-5zM332 434h5v5h-5zM400 434h6v5h-6zM379 444h5v5h-5zM363 449h6v4h-6zM416 449h5v4h-5zM358 453h5v5h-5zM369 453h5v5h-5zM337 473h5v4h-5zM374 473h5v4h-5zM326 477h6v5h-6zM326 482h11v5h-11zM369 482h15v5h-15zM321 496h5v5h-5zM369 496h5v5h-5zM326 501h6v5h-6zM337 501h5v5h-5zM347 511h6v5h-6zM289 516h6v4h-6zM342 544h5v5h-5zM284 587h5v5h-5zM347 592h6v5h-6zM221 645h5v4h-5z"/>
<path fill="#93d741" d="M358 449h5v4h-5zM337 477h5v5h-5zM326 492h6v4h-6zM326 496h6v5h-6zM337 496h5v5h-5zM332 506h5v5h-5zM353 506h5v5h-5z"/>
<path fill="#a2da37" d="M363 453h6v5h-6zM369 458h5v5h-5zM342 463h5v5h-5zM374 468h5v5h-5zM332 477h5v5h-5zM337 482h5v5h-5zM363 487h6v5h-6zM332 501h5v5h-5zM347 501h6v5h-6zM326 506h6v5h-6z"/>
<path fill="#8bd646" d="M347 458h6v5h-6zM379 463h5v5h-5zM379 468h11v5h-11zM369 487h10v5h-10zM363 492h6v4h-6zM358 496h11v5h-11zM284 516h5v4h-5zM321 525h5v5h-5zM347 539h6v5h-6z"/>
<path fill="#addc30" d="M358 458h5v5h-5zM374 463h5v5h-5zM342 468h11v5h-11zM337 487h5v5h-5z"/>
<path fill="#bddf26" d="M363 458h6v5h-6zM363 463h6v5h-6zM353 468h5v5h-5zM369 468h5v5h-5zM342 477h5v5h-5zM363 482h6v5h-6zM342 501h5v5h-5zM342 506h5v5h-5z"/>
<path fill="#9bd93c" d="M347 463h6v5h-6zM374 477h5v5h-5zM332 496h5v5h-5zM347 496h11v5h-11zM321 506h5v5h-5zM337 506h5v5h-5zM332 511h5v5h-5zM300 539h5v5h-5z"/>
<path fill="#b5de2b" d="M353 463h5v5h-5z"/>
<path fill="#cde11d" d="M358 463h5v5h-5zM369 463h5v5h-5zM358 492h5v4h-5z"/>
<path fill="#dfe318" d="M358 468h5v5h-5zM353 473h5v4h-5zM347 487h6v5h-6zM353 492h5v4h-5zM342 496h5v5h-5z"/>
<path fill="#f6e620" d="M363 468h6v5h-6zM353 487h10v5h-10z"/>
<path fill="#d8e219" d="M342 473h5v4h-5zM369 473h5v4h-5zM347 477h6v5h-6zM358 482h5v5h-5z"/>
<path fill="#efe51c" d="M347 473h6v4h-6zM363 477h6v5h-6z"/>
<path fill="#fde725" d="M358 473h11v4h-11zM353 477h10v5h-10zM347 482h11v5h-11zM337 492h5v4h-5z"/>
<path fill="#c5e021" d="M369 477h5v5h-5zM342 482h5v5h-5zM332 487h5v5h-5zM342 487h5v5h-5zM342 492h11v4h-11z"/>
</g>
<clipPath id="axclip"><rect x="94.5" y="224.5" width="528" height="478"/></clipPath>
<g clip-path="url(#axclip)">
<path d="M169.70 463.41a188.40 170.59 0 1 0 376.81 0a188.40 170.59 0 1 0 -376.81 0zM196.61 463.41a161.49 146.22 0 1 0 322.98 0a161.49 146.22 0 1 0 -322.98 0z" fill="#c0c0c0" fill-opacity="0.8" fill-rule="evenodd"/>
<ellipse cx="358.10" cy="463.41" rx="107.66" ry="97.48" fill="none" stroke="#d62728" stroke-opacity="0.95" stroke-width="1.15" stroke-dasharray="3.7 1.6"/>
<path d="M336.57 443.91L379.63 482.91M336.57 482.91L379.63 443.91" stroke="#d62728" stroke-opacity="0.85" stroke-width="1.1" fill="none"/>
</g>
<rect x="94.5" y="224.5" width="528" height="478" fill="none" stroke="#000" stroke-width="1" shape-rendering="crispEdges"/>
<text x="142.1" y="717" font-size="10" text-anchor="middle" textLength="14.6" lengthAdjust="spacing">1.6</text>
<text x="249.1" y="717" font-size="10" text-anchor="middle" textLength="14.6" lengthAdjust="spacing">1.8</text>
<text x="357.1" y="717" font-size="10" text-anchor="middle" textLength="14.6" lengthAdjust="spacing">2.0</text>
<text x="465.1" y="717" font-size="10" text-anchor="middle" textLength="14.6" lengthAdjust="spacing">2.2</text>
<text x="572.1" y="717" font-size="10" text-anchor="middle" textLength="14.6" lengthAdjust="spacing">2.4</text>
<text x="87.5" y="272.0" font-size="10" text-anchor="end" textLength="14.6" lengthAdjust="spacing">3.4</text>
<text x="87.5" y="370.0" font-size="10" text-anchor="end" textLength="14.6" lengthAdjust="spacing">3.2</text>
<text x="87.5" y="467.0" font-size="10" text-anchor="end" textLength="14.6" lengthAdjust="spacing">3.0</text>
<text x="87.5" y="565.0" font-size="10" text-anchor="end" textLength="14.6" lengthAdjust="spacing">2.8</text>
<text x="87.5" y="662.0" font-size="10" text-anchor="end" textLength="14.6" lengthAdjust="spacing">2.6</text>
<path d="M143.5 703v2.6M250.5 703v2.6M358.5 703v2.6M466.5 703v2.6M573.5 703v2.6M94 268.5h-2.8M94 366.5h-2.8M94 463.5h-2.8M94 561.5h-2.8M94 658.5h-2.8" stroke="#000" stroke-width="1" fill="none"/>
<text x="358" y="731" font-size="10" text-anchor="middle" textLength="111.5" lengthAdjust="spacing">[H,0,0] (in 1.926 A^-1)</text>
<text transform="translate(66 463.5) rotate(-90)" font-size="10" text-anchor="middle" textLength="111" lengthAdjust="spacing">[0,K,0] (in 2.176 A^-1)</text>
</svg>
<svg style="left:0;top:0" width="1320" height="802"><rect x="902" y="394" width="1" height="1" fill="#a6a6a6"/><rect x="903" y="395" width="1" height="1" fill="#fafafa"/><rect x="902" y="397" width="1" height="1" fill="#a6a6a6"/><rect x="903" y="398" width="1" height="1" fill="#fafafa"/><rect x="902" y="400" width="1" height="1" fill="#a6a6a6"/><rect x="903" y="401" width="1" height="1" fill="#fafafa"/><rect x="902" y="403" width="1" height="1" fill="#a6a6a6"/><rect x="903" y="404" width="1" height="1" fill="#fafafa"/><rect x="902" y="406" width="1" height="1" fill="#a6a6a6"/><rect x="903" y="407" width="1" height="1" fill="#fafafa"/><rect x="902" y="409" width="1" height="1" fill="#a6a6a6"/><rect x="903" y="410" width="1" height="1" fill="#fafafa"/></svg>
<div class="t" style="left:923px;top:21px">Peak Actions</div>
<div class="grp" style="left:924px;top:38px;width:370px;height:82px"></div>
<div class="combo" style="left:933px;top:49px;width:221px;height:31px"></div>
<div class="t" style="left:938px;top:58px">mdws_integrated</div>
<svg style="left:1138.6px;top:62.5px" width="8" height="5"><path d="M0 0h7.4l-3.7 4.2z" fill="#505050"/></svg>
<div class="a" style="left:1163px;top:49px;width:1px;height:61px;background:#a2a2a2"></div>
<div class="a" style="left:1164px;top:49px;width:1px;height:61px;background:#fbfbfb"></div>
<div class="btn" style="left:1173px;top:49px;width:111px;height:28px;line-height:28px">Add Peaks</div>
<div class="btn" style="left:1173px;top:79px;width:111px;height:28px;line-height:28px">Remove Peaks</div>
<div class="t" style="left:924px;top:153px;color:#d62728">Workspace: mdws_integrated</div>
<div class="grp" style="left:923px;top:169px;width:379px;height:615px"></div>
<div class="a" style="left:934px;top:180px;width:356px;height:592px;border:1px solid #b6b6b6;background:#fff"></div>
<div class="a" style="left:935px;top:181px;width:340px;height:576px;overflow:hidden">
<div class="a" style="left:0;top:0;width:340px;height:18px;background:linear-gradient(#fbfbfb,#f3f3f3 50%,#e9e9e9)"></div>
<div class="a" style="left:0;top:18px;width:340px;height:1px;background:#bdbdbd"></div>
<div class="a" style="left:134px;top:0;width:1px;height:18px;background:#c4c4c4"></div>
<div class="t" style="left:30px;top:3px;width:104px;text-align:center;font-weight:bold">RunNumber</div>
<div class="a" style="left:198px;top:0;width:1px;height:18px;background:#c4c4c4"></div>
<div class="t" style="left:135px;top:3px;width:63px;text-align:center;font-weight:bold">DetID</div>
<div class="a" style="left:259px;top:0;width:1px;height:18px;background:#c4c4c4"></div>
<div class="t" style="left:199px;top:3px;width:60px;text-align:center;font-weight:bold">h</div>
<div class="a" style="left:320px;top:0;width:1px;height:18px;background:#c4c4c4"></div>
<div class="t" style="left:260px;top:3px;width:60px;text-align:center;font-weight:bold">k</div>
<div class="a" style="left:385px;top:0;width:1px;height:18px;background:#c4c4c4"></div>
<div class="a" style="left:0;top:19px;width:29px;height:29px;background:linear-gradient(#fbfbfb,#f1f1f1 50%,#e8e8e8)"></div>
<div class="a" style="left:29px;top:19px;width:1px;height:30px;background:#bdbdbd"></div>
<div class="a" style="left:0;top:48px;width:29px;height:1px;background:#bdbdbd"></div>
<div class="t" style="left:2px;top:28px">1</div>
<div class="a" style="left:30px;top:48px;width:310px;height:1px;background:#c9c9c9"></div>
<div class="t" style="left:33px;top:27px">23767</div>
<div class="t" style="left:138px;top:27px">2036</div>
<div class="t" style="left:202px;top:27px">1.00000</div>
<div class="t" style="left:263px;top:27px">3.00000</div>
<div class="t" style="left:324px;top:27px">5.00000</div>
<div class="a" style="left:0;top:49px;width:29px;height:29px;background:linear-gradient(#fbfbfb,#f1f1f1 50%,#e8e8e8)"></div>
<div class="a" style="left:29px;top:49px;width:1px;height:30px;background:#bdbdbd"></div>
<div class="a" style="left:0;top:78px;width:29px;height:1px;background:#bdbdbd"></div>
<div class="t" style="left:2px;top:58px">2</div>
<div class="a" style="left:30px;top:78px;width:310px;height:1px;background:#c9c9c9"></div>
<div class="t" style="left:33px;top:57px">23767</div>
<div class="t" style="left:138px;top:57px">324</div>
<div class="t" style="left:202px;top:57px">3.00000</div>
<div class="t" style="left:263px;top:57px">4.00000</div>
<div class="t" style="left:324px;top:57px">5.00000</div>
<div class="a" style="left:0;top:79px;width:29px;height:29px;background:linear-gradient(#fbfbfb,#f1f1f1 50%,#e8e8e8)"></div>
<div class="a" style="left:29px;top:79px;width:1px;height:30px;background:#bdbdbd"></div>
<div class="a" style="left:0;top:108px;width:29px;height:1px;background:#bdbdbd"></div>
<div class="t" style="left:2px;top:88px">3</div>
<div class="a" style="left:30px;top:108px;width:310px;height:1px;background:#c9c9c9"></div>
<div class="t" style="left:33px;top:87px">23767</div>
<div class="t" style="left:138px;top:87px">1380</div>
<div class="t" style="left:202px;top:87px">1.00000</div>
<div class="t" style="left:263px;top:87px">2.00000</div>
<div class="t" style="left:324px;top:87px">3.00000</div>
<div class="a" style="left:0;top:109px;width:29px;height:29px;background:linear-gradient(#fbfbfb,#f1f1f1 50%,#e8e8e8)"></div>
<div class="a" style="left:29px;top:109px;width:1px;height:30px;background:#bdbdbd"></div>
<div class="a" style="left:0;top:138px;width:29px;height:1px;background:#bdbdbd"></div>
<div class="t" style="left:2px;top:118px">4</div>
<div class="a" style="left:30px;top:138px;width:310px;height:1px;background:#c9c9c9"></div>
<div class="t" style="left:33px;top:117px">23767</div>
<div class="t" style="left:138px;top:117px">1380</div>
<div class="t" style="left:202px;top:117px">0.00000</div>
<div class="t" style="left:263px;top:117px">0.00000</div>
<div class="t" style="left:324px;top:117px">0.00000</div>
<div class="a" style="left:0;top:139px;width:29px;height:29px;background:linear-gradient(#fbfbfb,#f1f1f1 50%,#e8e8e8)"></div>
<div class="a" style="left:29px;top:139px;width:1px;height:30px;background:#bdbdbd"></div>
<div class="a" style="left:0;top:168px;width:29px;height:1px;background:#bdbdbd"></div>
<div class="t" style="left:2px;top:148px">5</div>
<div class="a" style="left:30px;top:168px;width:310px;height:1px;background:#c9c9c9"></div>
<div class="t" style="left:33px;top:147px">23767</div>
<div class="t" style="left:138px;top:147px">3285</div>
<div class="t" style="left:202px;top:147px">0.00000</div>
<div class="t" style="left:263px;top:147px">0.00000</div>
<div class="t" style="left:324px;top:147px">0.00000</div>
<div class="a" style="left:0;top:169px;width:29px;height:29px;background:linear-gradient(#fbfbfb,#f1f1f1 50%,#e8e8e8)"></div>
<div class="a" style="left:29px;top:169px;width:1px;height:30px;background:#bdbdbd"></div>
<div class="a" style="left:0;top:198px;width:29px;height:1px;background:#bdbdbd"></div>
<div class="t" style="left:2px;top:178px">6</div>
<div class="a" style="left:30px;top:198px;width:310px;height:1px;background:#c9c9c9"></div>
<div class="t" style="left:33px;top:177px">23767</div>
<div class="t" style="left:138px;top:177px">4012</div>
<div class="t" style="left:202px;top:177px">0.00000</div>
<div class="t" style="left:263px;top:177px">0.00000</div>
<div class="t" style="left:324px;top:177px">0.00000</div>
<div class="a" style="left:0;top:199px;width:29px;height:29px;background:linear-gradient(#fbfbfb,#f1f1f1 50%,#e8e8e8)"></div>
<div class="a" style="left:29px;top:199px;width:1px;height:30px;background:#bdbdbd"></div>
<div class="a" style="left:0;top:228px;width:29px;height:1px;background:#bdbdbd"></div>
<div class="t" style="left:2px;top:208px">7</div>
<div class="a" style="left:30px;top:228px;width:310px;height:1px;background:#c9c9c9"></div>
<div class="t" style="left:33px;top:207px">23767</div>
<div class="t" style="left:138px;top:207px">252</div>
<div class="t" style="left:202px;top:207px">1.00000</div>
<div class="t" style="left:263px;top:207px">2.00000</div>
<div class="t" style="left:324px;top:207px">4.00000</div>
<div class="a" style="left:0;top:229px;width:29px;height:29px;background:linear-gradient(#fbfbfb,#f1f1f1 50%,#e8e8e8)"></div>
<div class="a" style="left:29px;top:229px;width:1px;height:30px;background:#bdbdbd"></div>
<div class="a" style="left:0;top:258px;width:29px;height:1px;background:#bdbdbd"></div>
<div class="t" style="left:2px;top:238px">8</div>
<div class="a" style="left:30px;top:258px;width:310px;height:1px;background:#c9c9c9"></div>
<div class="t" style="left:33px;top:237px">23767</div>
<div class="t" style="left:138px;top:237px">2299</div>
<div class="t" style="left:202px;top:237px">0.00000</div>
<div class="t" style="left:263px;top:237px">0.00000</div>
<div class="t" style="left:324px;top:237px">0.00000</div>
<div class="a" style="left:0;top:259px;width:29px;height:29px;background:linear-gradient(#fbfbfb,#f1f1f1 50%,#e8e8e8)"></div>
<div class="a" style="left:29px;top:259px;width:1px;height:30px;background:#bdbdbd"></div>
<div class="a" style="left:0;top:288px;width:29px;height:1px;background:#bdbdbd"></div>
<div class="t" style="left:2px;top:268px">9</div>
<div class="a" style="left:30px;top:259px;width:310px;height:29px;background:#308cc6"></div>
<div class="a" style="left:30px;top:288px;width:310px;height:1px;background:#c9c9c9"></div>
<div class="t" style="left:33px;top:267px;color:#fff">23767</div>
<div class="t" style="left:138px;top:267px;color:#fff">720</div>
<div class="t" style="left:202px;top:267px;color:#fff">2.00000</div>
<div class="t" style="left:263px;top:267px;color:#fff">3.00000</div>
<div class="t" style="left:324px;top:267px;color:#fff">4.00000</div>
<div class="a" style="left:0;top:289px;width:29px;height:29px;background:linear-gradient(#fbfbfb,#f1f1f1 50%,#e8e8e8)"></div>
<div class="a" style="left:29px;top:289px;width:1px;height:30px;background:#bdbdbd"></div>
<div class="a" style="left:0;top:318px;width:29px;height:1px;background:#bdbdbd"></div>
<div class="t" style="left:2px;top:298px">10</div>
<div class="a" style="left:30px;top:318px;width:310px;height:1px;background:#c9c9c9"></div>
<div class="t" style="left:33px;top:297px">23767</div>
<div class="t" style="left:138px;top:297px">3233</div>
<div class="t" style="left:202px;top:297px">1.00000</div>
<div class="t" style="left:263px;top:297px">3.00000</div>
<div class="t" style="left:324px;top:297px">4.00000</div>
<div class="a" style="left:0;top:319px;width:29px;height:29px;background:linear-gradient(#fbfbfb,#f1f1f1 50%,#e8e8e8)"></div>
<div class="a" style="left:29px;top:319px;width:1px;height:30px;background:#bdbdbd"></div>
<div class="a" style="left:0;top:348px;width:29px;height:1px;background:#bdbdbd"></div>
<div class="t" style="left:2px;top:328px">11</div>
<div class="a" style="left:30px;top:348px;width:310px;height:1px;background:#c9c9c9"></div>
<div class="t" style="left:33px;top:327px">23767</div>
<div class="t" style="left:138px;top:327px">38877</div>
<div class="t" style="left:202px;top:327px">4.00000</div>
<div class="t" style="left:263px;top:327px">4.00000</div>
<div class="t" style="left:324px;top:327px">4.00000</div>
<div class="a" style="left:0;top:349px;width:29px;height:29px;background:linear-gradient(#fbfbfb,#f1f1f1 50%,#e8e8e8)"></div>
<div class="a" style="left:29px;top:349px;width:1px;height:30px;background:#bdbdbd"></div>
<div class="a" style="left:0;top:378px;width:29px;height:1px;background:#bdbdbd"></div>
<div class="t" style="left:2px;top:358px">12</div>
<div class="a" style="left:30px;top:378px;width:310px;height:1px;background:#c9c9c9"></div>
<div class="t" style="left:33px;top:357px">23767</div>
<div class="t" style="left:138px;top:357px">38877</div>
<div class="t" style="left:202px;top:357px">2.00000</div>
<div class="t" style="left:263px;top:357px">2.00000</div>
<div class="t" style="left:324px;top:357px">2.00000</div>
<div class="a" style="left:0;top:379px;width:29px;height:29px;background:linear-gradient(#fbfbfb,#f1f1f1 50%,#e8e8e8)"></div>
<div class="a" style="left:29px;top:379px;width:1px;height:30px;background:#bdbdbd"></div>
<div class="a" style="left:0;top:408px;width:29px;height:1px;background:#bdbdbd"></div>
<div class="t" style="left:2px;top:388px">13</div>
<div class="a" style="left:30px;top:408px;width:310px;height:1px;background:#c9c9c9"></div>
<div class="t" style="left:33px;top:387px">23767</div>
<div class="t" style="left:138px;top:387px">38877</div>
<div class="t" style="left:202px;top:387px">3.00000</div>
<div class="t" style="left:263px;top:387px">3.00000</div>
<div class="t" style="left:324px;top:387px">3.00000</div>
<div class="a" style="left:0;top:409px;width:29px;height:29px;background:linear-gradient(#fbfbfb,#f1f1f1 50%,#e8e8e8)"></div>
<div class="a" style="left:29px;top:409px;width:1px;height:30px;background:#bdbdbd"></div>
<div class="a" style="left:0;top:438px;width:29px;height:1px;background:#bdbdbd"></div>
<div class="t" style="left:2px;top:418px">14</div>
<div class="a" style="left:30px;top:438px;width:310px;height:1px;background:#c9c9c9"></div>
<div class="t" style="left:33px;top:417px">23767</div>
<div class="t" style="left:138px;top:417px">38270</div>
<div class="t" style="left:202px;top:417px">4.00000</div>
<div class="t" style="left:263px;top:417px">3.00000</div>
<div class="t" style="left:324px;top:417px">3.00000</div>
<div class="a" style="left:0;top:439px;width:29px;height:29px;background:linear-gradient(#fbfbfb,#f1f1f1 50%,#e8e8e8)"></div>
<div class="a" style="left:29px;top:439px;width:1px;height:30px;background:#bdbdbd"></div>
<div class="a" style="left:0;top:468px;width:29px;height:1px;background:#bdbdbd"></div>
<div class="t" style="left:2px;top:448px">15</div>
<div class="a" style="left:30px;top:468px;width:310px;height:1px;background:#c9c9c9"></div>
<div class="t" style="left:33px;top:447px">23767</div>
<div class="t" style="left:138px;top:447px">43730</div>
<div class="t" style="left:202px;top:447px">0.00000</div>
<div class="t" style="left:263px;top:447px">0.00000</div>
<div class="t" style="left:324px;top:447px">0.00000</div>
<div class="a" style="left:0;top:469px;width:29px;height:29px;background:linear-gradient(#fbfbfb,#f1f1f1 50%,#e8e8e8)"></div>
<div class="a" style="left:29px;top:469px;width:1px;height:30px;background:#bdbdbd"></div>
<div class="a" style="left:0;top:498px;width:29px;height:1px;background:#bdbdbd"></div>
<div class="t" style="left:2px;top:478px">16</div>
<div class="a" style="left:30px;top:498px;width:310px;height:1px;background:#c9c9c9"></div>
<div class="t" style="left:33px;top:477px">23767</div>
<div class="t" style="left:138px;top:477px">41699</div>
<div class="t" style="left:202px;top:477px">0.00000</div>
<div class="t" style="left:263px;top:477px">0.00000</div>
<div class="t" style="left:324px;top:477px">0.00000</div>
<div class="a" style="left:0;top:499px;width:29px;height:29px;background:linear-gradient(#fbfbfb,#f1f1f1 50%,#e8e8e8)"></div>
<div class="a" style="left:29px;top:499px;width:1px;height:30px;background:#bdbdbd"></div>
<div class="a" style="left:0;top:528px;width:29px;height:1px;background:#bdbdbd"></div>
<div class="t" style="left:2px;top:508px">17</div>
<div class="a" style="left:30px;top:528px;width:310px;height:1px;background:#c9c9c9"></div>
<div class="t" style="left:33px;top:507px">23767</div>
<div class="t" style="left:138px;top:507px">42813</div>
<div class="t" style="left:202px;top:507px">3.00000</div>
<div class="t" style="left:263px;top:507px">2.00000</div>
<div class="t" style="left:324px;top:507px">1.00000</div>
<div class="a" style="left:0;top:529px;width:29px;height:29px;background:linear-gradient(#fbfbfb,#f1f1f1 50%,#e8e8e8)"></div>
<div class="a" style="left:29px;top:529px;width:1px;height:30px;background:#bdbdbd"></div>
<div class="a" style="left:0;top:558px;width:29px;height:1px;background:#bdbdbd"></div>
<div class="t" style="left:2px;top:538px">18</div>
<div class="a" style="left:30px;top:558px;width:310px;height:1px;background:#c9c9c9"></div>
<div class="t" style="left:33px;top:537px">23767</div>
<div class="t" style="left:138px;top:537px">42749</div>
<div class="t" style="left:202px;top:537px">0.00000</div>
<div class="t" style="left:263px;top:537px">0.00000</div>
<div class="t" style="left:324px;top:537px">0.00000</div>
<div class="a" style="left:0;top:559px;width:29px;height:29px;background:linear-gradient(#fbfbfb,#f1f1f1 50%,#e8e8e8)"></div>
<div class="a" style="left:29px;top:559px;width:1px;height:30px;background:#bdbdbd"></div>
<div class="a" style="left:0;top:588px;width:29px;height:1px;background:#bdbdbd"></div>
<div class="t" style="left:2px;top:568px">19</div>
<div class="a" style="left:30px;top:588px;width:310px;height:1px;background:#c9c9c9"></div>
<div class="t" style="left:33px;top:567px">23767</div>
<div class="t" style="left:138px;top:567px">44563</div>
<div class="t" style="left:202px;top:567px">3.00000</div>
<div class="t" style="left:263px;top:567px">3.00000</div>
<div class="t" style="left:324px;top:567px">2.00000</div>
<div class="a" style="left:134px;top:19px;width:1px;height:560px;background:#c9c9c9"></div>
<div class="a" style="left:198px;top:19px;width:1px;height:560px;background:#c9c9c9"></div>
<div class="a" style="left:259px;top:19px;width:1px;height:560px;background:#c9c9c9"></div>
<div class="a" style="left:320px;top:19px;width:1px;height:560px;background:#c9c9c9"></div>
</div>
<div class="a" style="left:1275px;top:181px;width:1px;height:590px;background:#c4c4c4"></div>
<div class="a" style="left:1276px;top:181px;width:13px;height:576px;background:#e0e0e0"></div>
<div class="a" style="left:1276px;top:181px;width:13px;height:14px;background:linear-gradient(#ffffff,#f2f2f2);border-bottom:1px solid #c6c6c6"></div>
<div class="a" style="left:1276px;top:195px;width:13px;height:50px;background:linear-gradient(90deg,#ffffff,#f0f0f0);border-bottom:1px solid #c2c2c2"></div>
<div class="a" style="left:1276px;top:743px;width:13px;height:14px;background:linear-gradient(#ffffff,#f2f2f2);border-top:1px solid #c6c6c6"></div>
<svg style="left:1276px;top:181px" width="13" height="576"><path d="M3 8.7l3.6-4.4 3.6 4.4z M3 566.7l3.6 4.4 3.6-4.4z" fill="#5a5a5a"/></svg>
<div class="a" style="left:935px;top:757px;width:355px;height:1px;background:#c4c4c4"></div>
<div class="a" style="left:935px;top:758px;width:340px;height:13px;background:#e0e0e0"></div>
<div class="a" style="left:935px;top:758px;width:13px;height:13px;background:linear-gradient(#ffffff,#f2f2f2);border-right:1px solid #c6c6c6"></div>
<div class="a" style="left:949px;top:758px;width:32px;height:13px;background:linear-gradient(#ffffff,#f0f0f0);border-right:1px solid #c2c2c2"></div>
<div class="a" style="left:1261px;top:758px;width:14px;height:13px;background:linear-gradient(#ffffff,#f2f2f2);border-left:1px solid #c6c6c6"></div>
<svg style="left:935px;top:758px" width="340" height="13"><path d="M8.1 2.7l-4.3 3.7 4.3 3.7z M330.8 2.7l4.3 3.7-4.3 3.7z" fill="#5a5a5a"/></svg>
<div class="a" style="left:1276px;top:758px;width:13px;height:13px;background:#efefef"></div>
</div></body></html>
